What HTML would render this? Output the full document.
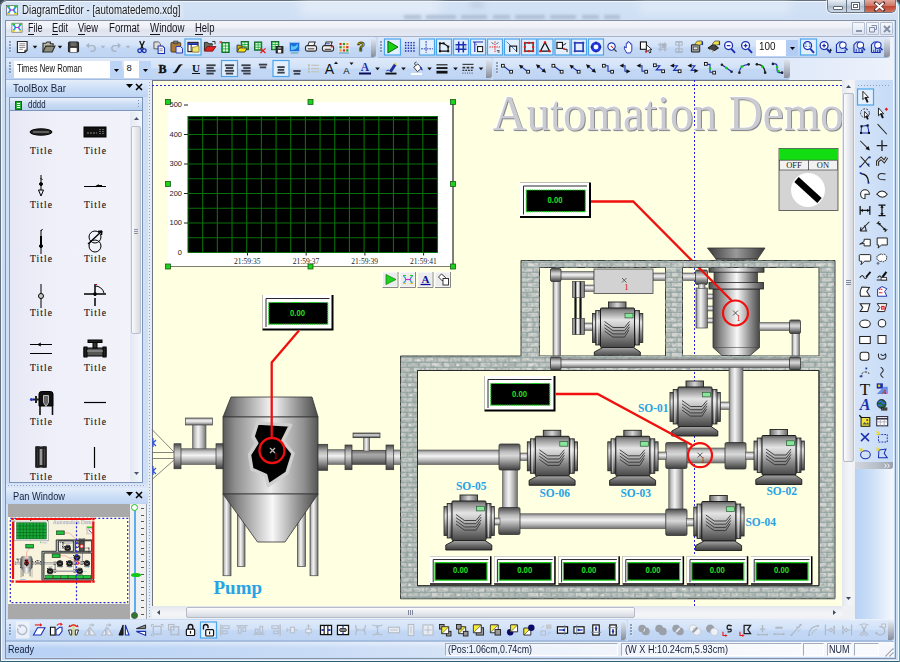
<!DOCTYPE html>
<html lang="en"><head><meta charset="utf-8"><title>DiagramEditor - [automatedemo.xdg]</title>
<style>
html,body{margin:0;padding:0;background:#3f4a56}
body{width:900px;height:662px;overflow:hidden;position:relative;font-family:"Liberation Sans",sans-serif}
#win{position:absolute;left:0;top:0;width:900px;height:662px;overflow:hidden}
#win i{display:block}
svg{overflow:visible}
</style></head><body><div id="win">
<div style="position:absolute;left:0px;top:0px;width:900px;height:662px;background:#d3e3f5;border-radius:7px 7px 0 0;"></div>
<div style="position:absolute;left:0px;top:0px;width:898px;height:660px;border:1px solid #62707f;border-right-color:#43a9cf;border-bottom-color:#2f6072;border-radius:7px 7px 1px 1px;box-shadow:inset 0 0 0 1px rgba(255,255,255,.75);background:linear-gradient(#d3e2f5,#cfdff4 20px,#cbddf4 300px,#cbddf5);"></div>
<div style="position:absolute;left:300px;top:0px;width:140px;height:14px;background:#eef4fb;filter:blur(6px);opacity:.7"></div>
<div style="position:absolute;left:640px;top:2px;width:150px;height:10px;background:#e9f1fa;filter:blur(5px);opacity:.7"></div>
<div style="position:absolute;left:404px;top:15px;width:216px;height:4px;background:repeating-linear-gradient(90deg,#76869c 0 17px,transparent 17px 22px,#76869c 22px 52px,transparent 52px 57px,#76869c 57px 83px,transparent 83px 89px);filter:blur(1.8px);opacity:.38"></div>
<div style="position:absolute;left:470px;top:2px;width:14px;height:5px;background:#9fb0c4;filter:blur(3px);opacity:.5"></div>
<div style="position:absolute;left:5px;top:20px;width:889px;height:637px;border:1px solid #8790a0;background:#c7dbf4;box-sizing:content-box;"></div>
<span style='position:absolute;left:22px;top:3.3px;font:12px/14.4px "Liberation Sans",sans-serif;color:#1a1a1a;white-space:nowrap;transform-origin:0 50%;transform:scale(0.8056,1);text-shadow:0 0 5px #fff,0 0 8px #fff;'>DiagramEditor - [automatedemo.xdg]</span>
<div style="position:absolute;left:827px;top:0px;width:67px;height:12px;border:1px solid #6b7684;border-top:none;border-radius:0 0 5px 5px;background:linear-gradient(#e8eef6,#c3cfde 45%,#aebccf 50%,#cdd8e6);box-shadow:0 0 0 1px rgba(255,255,255,.6);overflow:hidden"><div style="position:absolute;left:18px;top:0;width:1px;height:13px;background:#6b7684"></div><div style="position:absolute;left:36px;top:0;width:31px;height:13px;border-left:1px solid #6b7684;background:linear-gradient(#e3ab9f,#cf7563 45%,#bd4833 50%,#d27a64)"></div><div style="position:absolute;left:5px;top:5.500px;width:8px;height:2px;background:#fff;border:1px solid #5a6573;border-radius:1px"></div><div style="position:absolute;left:23px;top:2px;width:7px;height:6px;border:1px solid #5a6573;background:#fff;box-shadow:inset 0 0 0 1px #fff,inset 0 0 0 2px #5a6573"></div><svg style="position:absolute;left:46px;top:2px" width="11" height="9" viewBox="0 0 11 9"><path d="M1.5 1L9.5 8M9.5 1L1.5 8" stroke="#5a3030" stroke-width="3.4" stroke-linecap="round"/><path d="M1.5 1L9.5 8M9.5 1L1.5 8" stroke="#fff" stroke-width="2"/></svg></div>
<div style="position:absolute;left:6px;top:21px;width:888px;height:15px;background:linear-gradient(#f3f5fa,#eef1f7 40%,#dfe3ee 60%,#e4e8f2);border-bottom:1px solid #a7b3c8;"></div>
<span style='position:absolute;left:27.5px;top:20.8px;font:12px/14.4px "Liberation Sans",sans-serif;color:#15151f;white-space:nowrap;transform-origin:0 50%;transform:scale(0.7499,1);'>File</span>
<div style="position:absolute;left:27.5px;top:34px;width:6px;height:1px;background:#15151f"></div>
<span style='position:absolute;left:52px;top:20.8px;font:12px/14.4px "Liberation Sans",sans-serif;color:#15151f;white-space:nowrap;transform-origin:0 50%;transform:scale(0.7738,1);'>Edit</span>
<div style="position:absolute;left:52px;top:34px;width:6px;height:1px;background:#15151f"></div>
<span style='position:absolute;left:78px;top:20.8px;font:12px/14.4px "Liberation Sans",sans-serif;color:#15151f;white-space:nowrap;transform-origin:0 50%;transform:scale(0.7754,1);'>View</span>
<div style="position:absolute;left:78px;top:34px;width:7px;height:1px;background:#15151f"></div>
<span style='position:absolute;left:108.5px;top:20.8px;font:12px/14.4px "Liberation Sans",sans-serif;color:#15151f;white-space:nowrap;transform-origin:0 50%;transform:scale(0.8026,1);'>Format</span>
<span style='position:absolute;left:149.5px;top:20.8px;font:12px/14.4px "Liberation Sans",sans-serif;color:#15151f;white-space:nowrap;transform-origin:0 50%;transform:scale(0.8084,1);'>Window</span>
<div style="position:absolute;left:149.5px;top:34px;width:10px;height:1px;background:#15151f"></div>
<span style='position:absolute;left:194.5px;top:20.8px;font:12px/14.4px "Liberation Sans",sans-serif;color:#15151f;white-space:nowrap;transform-origin:0 50%;transform:scale(0.7902,1);'>Help</span>
<div style="position:absolute;left:194.5px;top:34px;width:8px;height:1px;background:#15151f"></div>
<div style="position:absolute;left:852px;top:22px;width:13px;height:13px;border:1px solid #b5c0d4;background:linear-gradient(#f6f8fc,#dfe5f0);box-sizing:border-box;border-radius:1px"></div>
<div style="position:absolute;left:866px;top:22px;width:13px;height:13px;border:1px solid #b5c0d4;background:linear-gradient(#f6f8fc,#dfe5f0);box-sizing:border-box;border-radius:1px"></div>
<div style="position:absolute;left:880px;top:22px;width:13px;height:13px;border:1px solid #b5c0d4;background:linear-gradient(#f6f8fc,#dfe5f0);box-sizing:border-box;border-radius:1px"></div>
<div style="position:absolute;left:856px;top:30px;width:6px;height:2px;background:#8a96ac"></div>
<svg style="position:absolute;left:869px;top:25px" width="8" height="8"><path d="M2.5 .5h5v4h-2M.5 2.5h5v4.5h-5z" fill="none" stroke="#7f8ca6"/></svg>
<svg style="position:absolute;left:883px;top:25px" width="8" height="8"><path d="M1 1l6 6M7 1l-6 6" stroke="#7f8ca6" stroke-width="1.8"/></svg>
<div style="position:absolute;left:6px;top:37px;width:888px;height:21px;background:linear-gradient(90deg,#c4d9f5,#cbddf6 70%,#edf2fb);"></div>
<div style="position:absolute;left:6px;top:37px;width:370px;height:20px;background:linear-gradient(#dfeafa,#d2e2f8 45%,#c3d8f5 55%,#bfd5f3);border-radius:0 3px 3px 0;border-bottom:1px solid #a3bbdc;"></div>
<div style="position:absolute;left:371px;top:39px;width:5px;height:18px;background:linear-gradient(#dde3ec,#b4bbc6 50%,#878e99);border-radius:0 3px 3px 0;"></div>
<div style="position:absolute;left:378px;top:37px;width:512px;height:20px;background:linear-gradient(#dfeafa,#d2e2f8 45%,#c3d8f5 55%,#bfd5f3);border-radius:0 3px 3px 0;border-bottom:1px solid #a3bbdc;"></div>
<div style="position:absolute;left:884px;top:39px;width:6px;height:18px;background:linear-gradient(#dde3ec,#b4bbc6 50%,#878e99);border-radius:0 3px 3px 0;"></div>
<div style="position:absolute;left:9px;top:41px;width:3px;height:13px;"><i style="position:absolute;left:0;top:0px;width:2px;height:2px;background:#8c9db8;box-shadow:.5px .5px 0 rgba(255,255,255,.6)"></i><i style="position:absolute;left:0;top:3px;width:2px;height:2px;background:#8c9db8;box-shadow:.5px .5px 0 rgba(255,255,255,.6)"></i><i style="position:absolute;left:0;top:6px;width:2px;height:2px;background:#8c9db8;box-shadow:.5px .5px 0 rgba(255,255,255,.6)"></i><i style="position:absolute;left:0;top:9px;width:2px;height:2px;background:#8c9db8;box-shadow:.5px .5px 0 rgba(255,255,255,.6)"></i></div>
<div style="position:absolute;left:380px;top:41px;width:3px;height:13px;"><i style="position:absolute;left:0;top:0px;width:2px;height:2px;background:#8c9db8;box-shadow:.5px .5px 0 rgba(255,255,255,.6)"></i><i style="position:absolute;left:0;top:3px;width:2px;height:2px;background:#8c9db8;box-shadow:.5px .5px 0 rgba(255,255,255,.6)"></i><i style="position:absolute;left:0;top:6px;width:2px;height:2px;background:#8c9db8;box-shadow:.5px .5px 0 rgba(255,255,255,.6)"></i><i style="position:absolute;left:0;top:9px;width:2px;height:2px;background:#8c9db8;box-shadow:.5px .5px 0 rgba(255,255,255,.6)"></i></div>
<div style="position:absolute;left:6px;top:58px;width:888px;height:22px;background:linear-gradient(90deg,#c4d9f5,#cbddf6 70%,#edf2fb);"></div>
<div style="position:absolute;left:6px;top:58px;width:486px;height:21px;background:linear-gradient(#dfeafa,#d2e2f8 45%,#c3d8f5 55%,#bfd5f3);border-radius:0 3px 3px 0;border-bottom:1px solid #a3bbdc;"></div>
<div style="position:absolute;left:486px;top:60px;width:6px;height:18px;background:linear-gradient(#dde3ec,#b4bbc6 50%,#878e99);border-radius:0 3px 3px 0;"></div>
<div style="position:absolute;left:493px;top:58px;width:297px;height:21px;background:linear-gradient(#dfeafa,#d2e2f8 45%,#c3d8f5 55%,#bfd5f3);border-radius:0 3px 3px 0;border-bottom:1px solid #a3bbdc;"></div>
<div style="position:absolute;left:784px;top:60px;width:6px;height:18px;background:linear-gradient(#dde3ec,#b4bbc6 50%,#878e99);border-radius:0 3px 3px 0;"></div>
<div style="position:absolute;left:9px;top:62px;width:3px;height:13px;"><i style="position:absolute;left:0;top:0px;width:2px;height:2px;background:#8c9db8;box-shadow:.5px .5px 0 rgba(255,255,255,.6)"></i><i style="position:absolute;left:0;top:3px;width:2px;height:2px;background:#8c9db8;box-shadow:.5px .5px 0 rgba(255,255,255,.6)"></i><i style="position:absolute;left:0;top:6px;width:2px;height:2px;background:#8c9db8;box-shadow:.5px .5px 0 rgba(255,255,255,.6)"></i><i style="position:absolute;left:0;top:9px;width:2px;height:2px;background:#8c9db8;box-shadow:.5px .5px 0 rgba(255,255,255,.6)"></i></div>
<div style="position:absolute;left:496px;top:62px;width:3px;height:13px;"><i style="position:absolute;left:0;top:0px;width:2px;height:2px;background:#8c9db8;box-shadow:.5px .5px 0 rgba(255,255,255,.6)"></i><i style="position:absolute;left:0;top:3px;width:2px;height:2px;background:#8c9db8;box-shadow:.5px .5px 0 rgba(255,255,255,.6)"></i><i style="position:absolute;left:0;top:6px;width:2px;height:2px;background:#8c9db8;box-shadow:.5px .5px 0 rgba(255,255,255,.6)"></i><i style="position:absolute;left:0;top:9px;width:2px;height:2px;background:#8c9db8;box-shadow:.5px .5px 0 rgba(255,255,255,.6)"></i></div>
<div style="position:absolute;left:14px;top:61px;width:96px;height:17px;background:#fff"></div>
<div style="position:absolute;left:110px;top:61px;width:12px;height:17px;background:#bcd4f6"></div>
<div style="position:absolute;left:124px;top:61px;width:15px;height:17px;background:#fff"></div>
<div style="position:absolute;left:139px;top:61px;width:12px;height:17px;background:#bcd4f6"></div>
<span style='position:absolute;left:17px;top:61.7px;font:10.5px/12.6px "Liberation Sans",sans-serif;color:#111;white-space:nowrap;transform-origin:0 50%;transform:scale(0.7313,1);'>Times New Roman</span>
<span style='position:absolute;left:126.5px;top:61.8px;font:9.5px/11.4px "Liberation Sans",sans-serif;color:#111;white-space:nowrap;transform-origin:0 50%;transform:scale(1.0000,1);'>8</span>
<svg style="position:absolute;left:114px;top:69px" width="5" height="3"><path d="M0 0h5L2.5 3z" fill="#000"/></svg>
<svg style="position:absolute;left:143px;top:69px" width="5" height="3"><path d="M0 0h5L2.5 3z" fill="#000"/></svg>
<div style="position:absolute;left:756px;top:40px;width:30px;height:16px;background:#fff"></div>
<div style="position:absolute;left:786px;top:40px;width:12px;height:16px;background:#b2ccf5"></div>
<span style='position:absolute;left:759px;top:40.5px;font:10px/12.0px "Liberation Sans",sans-serif;color:#111;white-space:nowrap;transform-origin:0 50%;transform:scale(0.9890,1);'>100</span>
<svg style="position:absolute;left:790px;top:47px" width="5" height="3"><path d="M0 0h5L2.5 3z" fill="#000"/></svg>
<div style="position:absolute;left:6px;top:80px;width:142px;height:539px;background:#cfe0f6"></div>
<div style="position:absolute;left:6px;top:80px;width:142px;height:17px;background:linear-gradient(#e4eefb,#cddff7 50%,#bdd4f4)"></div>
<span style='position:absolute;left:13px;top:81.9px;font:11px/13.2px "Liberation Sans",sans-serif;color:#15203a;white-space:nowrap;transform-origin:0 50%;transform:scale(0.8937,1);'>ToolBox Bar</span>
<svg style="position:absolute;left:126px;top:83.500px" width="7" height="4"><path d="M0 0h7L3.5 4z" fill="#000"/></svg>
<svg style="position:absolute;left:135px;top:82.700px" width="8" height="8"><path d="M1 1l6 6M7 1l-6 6" stroke="#000" stroke-width="1.5"/></svg>
<div style="position:absolute;left:9px;top:97px;width:134px;height:14px;border:1px solid #7d95b8;box-sizing:border-box;background:linear-gradient(#e9f1fc,#cbdcf4 50%,#bcd2f1)"></div>
<div style="position:absolute;left:15px;top:101px;width:7px;height:9px;background:#1fae2f;border:1px solid #0a6a14;box-sizing:border-box"><div style="position:absolute;left:1px;top:1px;width:3px;height:5px;background:repeating-linear-gradient(#fff 0 1px,#1fae2f 1px 2px)"></div></div>
<span style='position:absolute;left:28px;top:97.9px;font:11px/13.2px "Liberation Sans",sans-serif;color:#15203a;white-space:nowrap;transform-origin:0 50%;transform:scale(0.7152,1);'>dddd</span>
<div style="position:absolute;left:138px;top:100px;width:1px;height:9px;background:repeating-linear-gradient(#7d95b8 0 1px,transparent 1px 3px)"></div>
<div style="position:absolute;left:9px;top:111px;width:134px;height:372px;border:1px solid #7d95b8;border-top:none;box-sizing:border-box;background:linear-gradient(90deg,#e6e8f5,#eeeff8 30%,#f3f4fa)"></div>
<div style="position:absolute;left:130px;top:112px;width:12px;height:370px;background:linear-gradient(90deg,#e3e9f3,#f4f6fa)"></div>
<div style="position:absolute;left:131px;top:126px;width:10px;height:208px;border:1px solid #b9c0cc;box-sizing:border-box;border-radius:2px;background:linear-gradient(90deg,#fbfbfc,#e7e9ee 50%,#d7dae2)"></div>
<div style="position:absolute;left:134px;top:229px;width:4px;height:1px;background:#8a93a3;box-shadow:0 2px 0 #8a93a3,0 4px 0 #8a93a3"></div>
<svg style="position:absolute;left:134px;top:117px" width="5" height="3"><path d="M0 3h5L2.500 0z" fill="#4a5568"/></svg>
<svg style="position:absolute;left:134px;top:472px" width="5" height="3"><path d="M0 0h5L2.500 3z" fill="#4a5568"/></svg>
<svg style="position:absolute;left:0;top:0" width="150" height="490" viewBox="0 0 150 490"><text x="30" y="153.8" font-family='"Liberation Serif",serif' font-size="9.500" fill="#111" stroke="#111" stroke-width=".12" textLength="22" lengthAdjust="spacing">Title</text><text x="84" y="153.8" font-family='"Liberation Serif",serif' font-size="9.500" fill="#111" stroke="#111" stroke-width=".12" textLength="22" lengthAdjust="spacing">Title</text><text x="30" y="207.8" font-family='"Liberation Serif",serif' font-size="9.500" fill="#111" stroke="#111" stroke-width=".12" textLength="22" lengthAdjust="spacing">Title</text><text x="84" y="207.8" font-family='"Liberation Serif",serif' font-size="9.500" fill="#111" stroke="#111" stroke-width=".12" textLength="22" lengthAdjust="spacing">Title</text><text x="30" y="261.8" font-family='"Liberation Serif",serif' font-size="9.500" fill="#111" stroke="#111" stroke-width=".12" textLength="22" lengthAdjust="spacing">Title</text><text x="84" y="261.8" font-family='"Liberation Serif",serif' font-size="9.500" fill="#111" stroke="#111" stroke-width=".12" textLength="22" lengthAdjust="spacing">Title</text><text x="30" y="315.8" font-family='"Liberation Serif",serif' font-size="9.500" fill="#111" stroke="#111" stroke-width=".12" textLength="22" lengthAdjust="spacing">Title</text><text x="84" y="315.8" font-family='"Liberation Serif",serif' font-size="9.500" fill="#111" stroke="#111" stroke-width=".12" textLength="22" lengthAdjust="spacing">Title</text><text x="30" y="370.8" font-family='"Liberation Serif",serif' font-size="9.500" fill="#111" stroke="#111" stroke-width=".12" textLength="22" lengthAdjust="spacing">Title</text><text x="84" y="370.8" font-family='"Liberation Serif",serif' font-size="9.500" fill="#111" stroke="#111" stroke-width=".12" textLength="22" lengthAdjust="spacing">Title</text><text x="30" y="424.8" font-family='"Liberation Serif",serif' font-size="9.500" fill="#111" stroke="#111" stroke-width=".12" textLength="22" lengthAdjust="spacing">Title</text><text x="84" y="424.8" font-family='"Liberation Serif",serif' font-size="9.500" fill="#111" stroke="#111" stroke-width=".12" textLength="22" lengthAdjust="spacing">Title</text><text x="30" y="479.8" font-family='"Liberation Serif",serif' font-size="9.500" fill="#111" stroke="#111" stroke-width=".12" textLength="22" lengthAdjust="spacing">Title</text><text x="84" y="479.8" font-family='"Liberation Serif",serif' font-size="9.500" fill="#111" stroke="#111" stroke-width=".12" textLength="22" lengthAdjust="spacing">Title</text></svg>
<svg style="position:absolute;left:0;top:0" width="150" height="490" viewBox="0 0 150 490" fill="none" stroke="#000" stroke-width="1"><ellipse cx="41" cy="132" rx="11" ry="3.2" fill="#222"/><path d="M33 132h16" stroke="#999"/><rect x="84" y="127" width="22" height="10" fill="#111"/><path d="M87 133h10" stroke="#888" stroke-dasharray="2 1"/><path d="M100 129v6M103 129v6" stroke="#aaa" stroke-dasharray="1 1"/><path d="M41 175v7M40.5 178l2 2M41 184v6M38.500 190h5l-2.5 6z"/><circle cx="41" cy="184" r="1.5" fill="#000"/><path d="M84 186.500h22M97 185.500h5" /><path d="M96 186.500l3-1.500" stroke-width="1.500"/><path d="M41 230v24M41 231l1.500-2" /><path d="M41 236v12" stroke-width="2"/><circle cx="41" cy="246" r="1.500" fill="#000"/><circle cx="95" cy="237" r="6"/><circle cx="95" cy="246" r="6"/><path d="M88 244l14-13M102 231l-4 .5M102 231l-.5 4" stroke-width="1.300"/><path d="M41 284v24"/><circle cx="41" cy="296" r="2.500" fill="#ccc"/><path d="M84 294h9M97 294h9M95 284v8M95 298v8" stroke-width="1.500"/><path d="M95 286a9 9 0 0 1 9 7" /><circle cx="95" cy="294" r="1.500" fill="#000"/><path d="M95 286l2-2" stroke="#c00"/><path d="M30 344.500h22M30 353.500h22M38 344.500l3-1.500M38 344.500l3 1.500"/><rect x="84" y="348" width="22" height="8" fill="#555"/><rect x="84" y="347" width="3" height="10" fill="#222"/><rect x="103" y="347" width="3" height="10" fill="#222"/><rect x="93" y="341" width="4" height="7" fill="#333"/><rect x="88" y="340" width="14" height="2.500" fill="#222"/><path d="M87 351h16" stroke="#aaa"/><path d="M39 394q0-2.500 2.500-2.500h9q2.500 0 2.500 2.500v12h-14z" fill="#111"/><path d="M40 406v9M52.500 406v9" stroke="#111" stroke-width="1.600"/><path d="M43.500 395.500h5v7l-2.500 4-2.500-4z" fill="#666" stroke="#ddd" stroke-width=".8"/><path d="M33 399.500h6M36 396v7" stroke="#222" stroke-width="2"/><circle cx="31.500" cy="399.500" r="1.600" fill="#2233cc" stroke="none"/><path d="M84 402.500h22" stroke-width="1.200"/><rect x="36" y="447" width="10" height="20" fill="#999"/><rect x="36" y="447" width="3" height="20" fill="#333"/><rect x="43" y="447" width="3" height="20" fill="#444"/><path d="M36 448h10M36 466h10" stroke="#222" stroke-width="2"/><path d="M94.500 447v21" stroke-width="1.200"/></svg>
<div style="position:absolute;left:6px;top:484px;width:142px;height:4px;background:#dbe7f8"></div>
<div style="position:absolute;left:8px;top:485px;width:138px;height:1px;background:repeating-linear-gradient(90deg,#8ea2c0 0 1px,transparent 1px 3px)"></div>
<div style="position:absolute;left:6px;top:488px;width:142px;height:16px;background:linear-gradient(#e4eefb,#cddff7 50%,#bdd4f4)"></div>
<span style='position:absolute;left:13px;top:489.9px;font:11px/13.2px "Liberation Sans",sans-serif;color:#15203a;white-space:nowrap;transform-origin:0 50%;transform:scale(0.8421,1);'>Pan Window</span>
<svg style="position:absolute;left:126px;top:491.500px" width="7" height="4"><path d="M0 0h7L3.5 4z" fill="#000"/></svg>
<svg style="position:absolute;left:135px;top:490.700px" width="8" height="8"><path d="M1 1l6 6M7 1l-6 6" stroke="#000" stroke-width="1.5"/></svg>
<div style="position:absolute;left:8px;top:504px;width:122px;height:115px;background:#a9a9a9"></div>
<div style="position:absolute;left:8px;top:517px;width:121px;height:87px;background:#ffffe1"></div>
<div style="position:absolute;left:130px;top:504px;width:18px;height:115px;background:#f0f0f0"></div>
<div style="position:absolute;left:146px;top:504px;width:1px;height:115px;background:#9aa0aa"></div>
<div style="position:absolute;left:134px;top:509px;width:2px;height:105px;background:#5aaef2"></div>
<div style="position:absolute;left:130.5px;top:504px;width:5px;height:5px;border:1px solid #20c020;border-radius:50%;background:#fff"></div>
<div style="position:absolute;left:131px;top:612px;width:5px;height:5px;border-radius:50%;background:#2a7a2a;border:1px solid #555"></div>
<div style="position:absolute;left:131px;top:573px;width:10px;height:4px;border-radius:50%;background:#12c812"></div>
<div style="position:absolute;left:141px;top:508px;width:3px;height:110px;"><i style="position:absolute;left:0;top:0.0px;width:3px;height:1px;background:#555"></i><i style="position:absolute;left:0;top:6.6px;width:3px;height:1px;background:#555"></i><i style="position:absolute;left:0;top:13.2px;width:3px;height:1px;background:#555"></i><i style="position:absolute;left:0;top:19.8px;width:3px;height:1px;background:#555"></i><i style="position:absolute;left:0;top:26.4px;width:3px;height:1px;background:#555"></i><i style="position:absolute;left:0;top:33.0px;width:3px;height:1px;background:#555"></i><i style="position:absolute;left:0;top:39.6px;width:3px;height:1px;background:#555"></i><i style="position:absolute;left:0;top:46.2px;width:3px;height:1px;background:#555"></i><i style="position:absolute;left:0;top:52.8px;width:3px;height:1px;background:#555"></i><i style="position:absolute;left:0;top:59.4px;width:3px;height:1px;background:#555"></i><i style="position:absolute;left:0;top:66.0px;width:3px;height:1px;background:#555"></i><i style="position:absolute;left:0;top:72.6px;width:3px;height:1px;background:#555"></i><i style="position:absolute;left:0;top:79.2px;width:3px;height:1px;background:#555"></i><i style="position:absolute;left:0;top:85.8px;width:3px;height:1px;background:#555"></i><i style="position:absolute;left:0;top:92.4px;width:3px;height:1px;background:#555"></i><i style="position:absolute;left:0;top:99.0px;width:3px;height:1px;background:#555"></i><i style="position:absolute;left:0;top:105.6px;width:3px;height:1px;background:#555"></i></div>
<div style="position:absolute;left:148px;top:80px;width:4px;height:539px;background:#e4ecf8"></div>
<div style="position:absolute;left:149px;top:82px;width:1px;height:536px;background:repeating-linear-gradient(#8ea2c0 0 1px,transparent 1px 3px)"></div>
<div style="position:absolute;left:855px;top:80px;width:39px;height:539px;background:linear-gradient(90deg,#b7d2f5,#cadef7 40%,#f3f7fd 95%)"></div>
<div style="position:absolute;left:855px;top:80px;width:38px;height:389px;background:linear-gradient(90deg,#d6e5f9,#c6dbf6);border-radius:0 0 3px 3px"></div>
<div style="position:absolute;left:855px;top:462px;width:38px;height:7px;background:linear-gradient(90deg,#d0d5dd,#b8bec8 60%,#9aa1ac);border-radius:0 0 3px 3px;"></div>
<div style="position:absolute;left:858px;top:85px;width:32px;height:1px;background:repeating-linear-gradient(90deg,#8ea2c0 0 1px,transparent 1px 3px)"></div>
<div style="position:absolute;left:152px;top:80px;width:690px;height:526px;background:#ffffe1;border-left:1px solid #70757f;border-top:1px solid #70757f;box-sizing:border-box"></div>
<svg style="position:absolute;left:152px;top:81px" width="690" height="525" viewBox="152 81 690 525"><defs>
<pattern id="brick" width="48" height="20" patternUnits="userSpaceOnUse" x="401" y="357">
<rect width="48" height="20" fill="#93a4a2"/>
<rect x="0.6" y="0.8" width="10.900" height="3.900" fill="#c8cbc5"/>
<rect x="3.4" y="2.0" width="3.7" height="1.800" fill="#c3cbc8"/>
<rect x="12.6" y="0.8" width="10.900" height="3.900" fill="#c8cbc5"/>
<rect x="15.9" y="2.2" width="3.3" height="1.800" fill="#e2e3df"/>
<rect x="24.6" y="0.8" width="10.900" height="3.900" fill="#cbcdc8"/>
<rect x="29.9" y="1.7" width="2.2" height="1.800" fill="#e2e3df"/>
<rect x="36.6" y="0.8" width="10.900" height="3.900" fill="#cbcdc8"/>
<rect x="48.6" y="0.8" width="10.900" height="3.900" fill="#bcc1bd"/>
<rect x="54.2" y="2.1" width="2.3" height="1.800" fill="#e2e3df"/>
<rect x="-5.4" y="5.8" width="10.900" height="3.900" fill="#c5c8c3"/>
<rect x="6.6" y="5.8" width="10.900" height="3.900" fill="#bcc1bd"/>
<rect x="7.6" y="7.2" width="2.4" height="1.800" fill="#e2e3df"/>
<rect x="18.6" y="5.8" width="10.900" height="3.900" fill="#c5c8c3"/>
<rect x="30.6" y="5.8" width="10.900" height="3.900" fill="#d2d3cf"/>
<rect x="32.6" y="7.2" width="3.3" height="1.800" fill="#e2e3df"/>
<rect x="42.6" y="5.8" width="10.900" height="3.900" fill="#d4d6d1"/>
<rect x="48.4" y="6.7" width="2.0" height="1.800" fill="#bcc2be"/>
<rect x="0.6" y="10.8" width="10.900" height="3.900" fill="#c5c8c3"/>
<rect x="12.6" y="10.8" width="10.900" height="3.900" fill="#d2d3cf"/>
<rect x="15.1" y="11.9" width="2.0" height="1.800" fill="#c3cbc8"/>
<rect x="24.6" y="10.8" width="10.900" height="3.900" fill="#d4d6d1"/>
<rect x="27.1" y="12.1" width="3.0" height="1.800" fill="#bcc2be"/>
<rect x="36.6" y="10.8" width="10.900" height="3.900" fill="#c5c8c3"/>
<rect x="41.1" y="11.4" width="4.0" height="1.800" fill="#e2e3df"/>
<rect x="48.6" y="10.8" width="10.900" height="3.900" fill="#d4d6d1"/>
<rect x="51.6" y="11.8" width="2.8" height="1.800" fill="#bcc2be"/>
<rect x="-5.4" y="15.8" width="10.900" height="3.900" fill="#c8cbc5"/>
<rect x="6.6" y="15.8" width="10.900" height="3.900" fill="#bcc1bd"/>
<rect x="8.5" y="17.3" width="2.4" height="1.800" fill="#e2e3df"/>
<rect x="18.6" y="15.8" width="10.900" height="3.900" fill="#c0c5c1"/>
<rect x="30.6" y="15.8" width="10.900" height="3.900" fill="#d2d3cf"/>
<rect x="36.1" y="16.6" width="2.9" height="1.800" fill="#c3cbc8"/>
<rect x="42.6" y="15.8" width="10.900" height="3.900" fill="#d4d6d1"/>
</pattern>
<linearGradient id="hp" x1="0" y1="0" x2="0" y2="1"><stop offset="0" stop-color="#7a7a7a"/><stop offset=".18" stop-color="#c4c4c4"/><stop offset=".42" stop-color="#f4f4f4"/><stop offset=".7" stop-color="#bdbdbd"/><stop offset="1" stop-color="#6e6e6e"/></linearGradient>
<linearGradient id="vp" x1="0" y1="0" x2="1" y2="0"><stop offset="0" stop-color="#7a7a7a"/><stop offset=".18" stop-color="#c4c4c4"/><stop offset=".42" stop-color="#f4f4f4"/><stop offset=".7" stop-color="#bdbdbd"/><stop offset="1" stop-color="#6e6e6e"/></linearGradient>
<linearGradient id="hj" x1="0" y1="0" x2="0" y2="1"><stop offset="0" stop-color="#4a4a4a"/><stop offset=".3" stop-color="#bdbdbd"/><stop offset=".45" stop-color="#d8d8d8"/><stop offset="1" stop-color="#3e3e3e"/></linearGradient>
<linearGradient id="vj" x1="0" y1="0" x2="1" y2="0"><stop offset="0" stop-color="#4a4a4a"/><stop offset=".3" stop-color="#bdbdbd"/><stop offset=".45" stop-color="#d8d8d8"/><stop offset="1" stop-color="#3e3e3e"/></linearGradient>
<linearGradient id="mb" x1="0" y1="0" x2="0" y2="1"><stop offset="0" stop-color="#5c5c5c"/><stop offset=".08" stop-color="#909090"/><stop offset=".3" stop-color="#e4e4e4"/><stop offset=".42" stop-color="#d0d0d0"/><stop offset=".68" stop-color="#8a8a8a"/><stop offset="1" stop-color="#464646"/></linearGradient>
<linearGradient id="mc" x1="0" y1="0" x2="1" y2="0"><stop offset="0" stop-color="#3a3a3a"/><stop offset=".5" stop-color="#e0e0e0"/><stop offset="1" stop-color="#3a3a3a"/></linearGradient>
<linearGradient id="mt" x1="0" y1="0" x2="1" y2="0"><stop offset="0" stop-color="#6a6a6a"/><stop offset=".5" stop-color="#d6d6d6"/><stop offset="1" stop-color="#6a6a6a"/></linearGradient>
<linearGradient id="mbase" x1="0" y1="0" x2="0" y2="1"><stop offset="0" stop-color="#a8a8a8"/><stop offset=".5" stop-color="#6e6e6e"/><stop offset="1" stop-color="#3c3c3c"/></linearGradient>
<linearGradient id="tank" x1="0" y1="0" x2="1" y2="0"><stop offset="0" stop-color="#5a5a5a"/><stop offset=".12" stop-color="#8c8c8c"/><stop offset=".5" stop-color="#ececec"/><stop offset=".85" stop-color="#909090"/><stop offset="1" stop-color="#555"/></linearGradient>
<linearGradient id="tankd" x1="0" y1="0" x2="1" y2="0"><stop offset="0" stop-color="#4a4a4a"/><stop offset=".15" stop-color="#858585"/><stop offset=".52" stop-color="#f8f8f8"/><stop offset=".8" stop-color="#8e8e8e"/><stop offset="1" stop-color="#484848"/></linearGradient>
<linearGradient id="funnel" x1="0" y1="0" x2="1" y2="0"><stop offset="0" stop-color="#3a3a3a"/><stop offset=".5" stop-color="#9a9a9a"/><stop offset="1" stop-color="#3a3a3a"/></linearGradient>
<linearGradient id="valve" x1="0" y1="0" x2="0" y2="1"><stop offset="0" stop-color="#6a6a6a"/><stop offset=".3" stop-color="#a8a8a8"/><stop offset=".5" stop-color="#9a9a9a"/><stop offset="1" stop-color="#4a4a4a"/></linearGradient>
<filter id="mottle" x="-1%" y="-1%" width="102%" height="102%"><feTurbulence type="fractalNoise" baseFrequency=".22 .3" numOctaves="2" seed="7" result="n"/><feColorMatrix in="n" type="matrix" values="0 0 0 0 .25  0 0 0 0 .33  0 0 0 0 .32  0 0 0 1.6 -.62" result="m"/><feComposite in="m" in2="SourceGraphic" operator="in" result="mm"/><feMerge><feMergeNode in="SourceGraphic"/><feMergeNode in="mm"/></feMerge></filter>
<g id="motor">
 <rect x="16" y="0" width="17.500" height="6.500" fill="url(#mt)" stroke="#222" stroke-width=".9"/>
 <rect x="0" y="11.500" width="3.500" height="29" fill="url(#mb)" stroke="#222" stroke-width=".8"/>
 <rect x="46.800" y="11.500" width="3.500" height="29" fill="url(#mb)" stroke="#222" stroke-width=".8"/>
 <rect x="3.200" y="8.500" width="5" height="34.500" fill="url(#mb)" stroke="#222" stroke-width=".8"/>
 <rect x="42" y="8.500" width="5" height="34.500" fill="url(#mb)" stroke="#222" stroke-width=".8"/>
 <rect x="8" y="6" width="34" height="39.500" rx="1" fill="url(#mb)" stroke="#1c1c1c" stroke-width="1"/>
 <rect x="4.300" y="9" width="1.200" height="33.500" fill="#fff" opacity=".55"/>
 <rect x="43.800" y="9" width="1.200" height="33.500" fill="#fff" opacity=".55"/>
 <path d="M10.400 45.500h30.600l6.800 4.500v5h-46v-5z" fill="url(#mbase)" stroke="#1c1c1c" stroke-width=".9"/>
 <rect x="32.500" y="11.300" width="8" height="4.600" fill="#86e59a" stroke="#2d5a35" stroke-width=".7"/>
 <g fill="none" stroke="#333" stroke-width=".9">
  <path d="M12 19.500l8.500 6h11.500l5-6"/>
  <path d="M12 22.700l8.500 6h11.500l5-6.500"/>
  <path d="M12 25.900l8.500 6h11.500l5-7"/>
  <path d="M12 29.100l8.500 6h11.500l4.500-7"/>
 </g>
</g>
<g id="disp">
 <rect x="0" y="0" width="61.500" height="28.500" fill="#000"/>
 <rect x="0" y="0" width="60" height="27" fill="#fff"/>
 <path d="M3.200 26V3.300H58.500" fill="none" stroke="#2a2a2a" stroke-width="1"/>
 <rect x="5" y="6.400" width="52" height="17.500" fill="#000" stroke="#19d219" stroke-width="1.200"/>
</g>
<g id="dispL">
 <rect x="0" y="0" width="71" height="35.500" fill="#000"/>
 <rect x="0" y="0" width="69" height="33.500" fill="#fff"/>
 <path d="M3.500 32V3.500H67" fill="none" stroke="#2a2a2a" stroke-width="1"/>
 <rect x="6.300" y="7.500" width="59" height="21.700" fill="#000" stroke="#19d219" stroke-width="1.200" stroke-dasharray="1.200 .6"/>
</g>
</defs><path d="M152 85.500H842M694.500 80V606" stroke="#2222dd" stroke-width="1" stroke-dasharray="2 2" fill="none"/><g id="dwg"><rect x="168.500" y="102.500" width="285" height="164" fill="#000"/>
<rect x="168" y="102" width="284.500" height="164" fill="#fff"/>
<rect x="188" y="116" width="249.500" height="136.500" fill="#000"/>
<path d="M188.00 116V252.500 M202.68 116V252.500 M217.35 116V252.500 M232.03 116V252.500 M246.70 116V252.500 M261.38 116V252.500 M276.06 116V252.500 M290.73 116V252.500 M305.41 116V252.500 M320.08 116V252.500 M334.76 116V252.500 M349.44 116V252.500 M364.11 116V252.500 M378.79 116V252.500 M393.46 116V252.500 M408.14 116V252.500 M422.82 116V252.500 M437.49 116V252.500 M188 252.50H437.500 M188 237.75H437.500 M188 223.00H437.500 M188 208.25H437.500 M188 193.50H437.500 M188 178.75H437.500 M188 164.00H437.500 M188 149.25H437.500 M188 134.50H437.500 M188 119.75H437.500 M188 116.500H437.500" stroke="#087008" stroke-width="1.100" fill="none"/>
<text x="182" y="254.8" font-family='"Liberation Sans",sans-serif' font-size="7.5"   fill="#222" text-anchor="end" >0</text>
<text x="182" y="225.3" font-family='"Liberation Sans",sans-serif' font-size="7.5"   fill="#222" text-anchor="end" >100</text>
<path d="M184 223.0h4" stroke="#222" stroke-width="1"/>
<text x="182" y="195.8" font-family='"Liberation Sans",sans-serif' font-size="7.5"   fill="#222" text-anchor="end" >200</text>
<path d="M184 193.5h4" stroke="#222" stroke-width="1"/>
<text x="182" y="166.3" font-family='"Liberation Sans",sans-serif' font-size="7.5"   fill="#222" text-anchor="end" >300</text>
<path d="M184 164.0h4" stroke="#222" stroke-width="1"/>
<text x="182" y="136.8" font-family='"Liberation Sans",sans-serif' font-size="7.5"   fill="#222" text-anchor="end" >400</text>
<path d="M184 134.5h4" stroke="#222" stroke-width="1"/>
<text x="182" y="107.3" font-family='"Liberation Sans",sans-serif' font-size="7.5"   fill="#222" text-anchor="end" >500</text>
<path d="M184 105.0h4" stroke="#222" stroke-width="1"/>
<text x="247.3" y="263.5" font-family='"Liberation Serif",serif' font-size="7.5"   fill="#222" text-anchor="middle" >21:59:35</text>
<path d="M247.5 252.500v3" stroke="#222" stroke-width="1"/>
<text x="306.0" y="263.5" font-family='"Liberation Serif",serif' font-size="7.5"   fill="#222" text-anchor="middle" >21:59:37</text>
<path d="M306.2 252.500v3" stroke="#222" stroke-width="1"/>
<text x="364.70000000000005" y="263.5" font-family='"Liberation Serif",serif' font-size="7.5"   fill="#222" text-anchor="middle" >21:59:39</text>
<path d="M364.9 252.500v3" stroke="#222" stroke-width="1"/>
<text x="423.40000000000003" y="263.5" font-family='"Liberation Serif",serif' font-size="7.5"   fill="#222" text-anchor="middle" >21:59:41</text>
<path d="M423.6 252.500v3" stroke="#222" stroke-width="1"/>
<rect x="382.5" y="272" width="15" height="15" fill="#ececec" stroke="#fff" stroke-width="1"/><path d="M398.0 272v15.500h-15.500" fill="none" stroke="#888" stroke-width="1"/>
<rect x="400" y="272" width="15" height="15" fill="#ececec" stroke="#fff" stroke-width="1"/><path d="M415.5 272v15.500h-15.500" fill="none" stroke="#888" stroke-width="1"/>
<rect x="417.5" y="272" width="15" height="15" fill="#ececec" stroke="#fff" stroke-width="1"/><path d="M433.0 272v15.500h-15.500" fill="none" stroke="#888" stroke-width="1"/>
<rect x="435" y="272" width="15" height="15" fill="#ececec" stroke="#fff" stroke-width="1"/><path d="M450.5 272v15.500h-15.500" fill="none" stroke="#888" stroke-width="1"/>
<path d="M386 274.500l10 5-10 5z" fill="#1fd21f" stroke="#0a7a0a" stroke-width=".7"/>
<g stroke-width="1.200" fill="none"><path d="M403.500 276q4.500 3.500 0 7M412.500 276q-4.500 3.500 0 7" stroke="#39c"/><path d="M405 279.500h6" stroke="#c3c"/><path d="M403 275.500h3M410 275.500h3" stroke="#2c2"/><path d="M403 283.500h3M410 283.500h3" stroke="#dc2"/></g>
<text x="425.5" y="283" font-family='"Liberation Serif",serif' font-size="11" font-weight="bold"  fill="#10109a" text-anchor="middle" >A</text>
<path d="M420.500 284.500h10" stroke="#10109a" stroke-width="1.300"/>
<g fill="#fff" stroke="#222" stroke-width=".9"><path d="M438.500 277l3-3 4 3.500-3 3.500z"/><rect x="443" y="278.500" width="5.500" height="6.500"/></g>
<rect x="165.5" y="99.5" width="5" height="5" fill="#19d219" stroke="#1a5a1a" stroke-width=".8"/>
<rect x="308.0" y="99.5" width="5" height="5" fill="#19d219" stroke="#1a5a1a" stroke-width=".8"/>
<rect x="450.5" y="99.5" width="5" height="5" fill="#19d219" stroke="#1a5a1a" stroke-width=".8"/>
<rect x="165.5" y="181.5" width="5" height="5" fill="#19d219" stroke="#1a5a1a" stroke-width=".8"/>
<rect x="450.5" y="181.5" width="5" height="5" fill="#19d219" stroke="#1a5a1a" stroke-width=".8"/>
<rect x="165.5" y="264.0" width="5" height="5" fill="#19d219" stroke="#1a5a1a" stroke-width=".8"/>
<rect x="308.0" y="264.0" width="5" height="5" fill="#19d219" stroke="#1a5a1a" stroke-width=".8"/>
<rect x="450.5" y="264.0" width="5" height="5" fill="#19d219" stroke="#1a5a1a" stroke-width=".8"/>
<g transform="translate(492.500 130) scale(1 1.09)" style="filter:drop-shadow(1.2px 1.2px 0 #8a8a92) drop-shadow(-1px -1px 0 #fff)">
<text x="0" y="0" font-family='"Liberation Serif",serif' font-size="47" fill="#cbcbd2">Automation Demo</text>
</g>
<rect x="779" y="148.500" width="59" height="62" fill="#d4d4d4" stroke="#444" stroke-width=".8"/>
<rect x="779.400" y="148.900" width="58.200" height="11.300" fill="#12dc12"/>
<rect x="779.400" y="160.200" width="58.200" height="9.800" fill="#f2f2f2" stroke="#444" stroke-width=".7"/>
<path d="M808.500 160.200v9.800" stroke="#444" stroke-width=".8"/>
<text x="794" y="168.3" font-family='"Liberation Serif",serif' font-size="8.5"   fill="#222" text-anchor="middle" >OFF</text>
<text x="823" y="168.3" font-family='"Liberation Serif",serif' font-size="8.5"   fill="#222" text-anchor="middle" >ON</text>
<circle cx="808" cy="190" r="17" fill="#fff"/>
<path d="M796.500 179.500L819.500 200.500" stroke="#000" stroke-width="6.500"/>
<rect x="392" y="450" width="108" height="14.5" fill="url(#hp)" stroke="#555" stroke-width=".6"/>
<rect x="553" y="280" width="7.5" height="79" fill="url(#vp)" stroke="#555" stroke-width=".6"/>
<rect x="560" y="271.5" width="34" height="8.0" fill="url(#hp)" stroke="#555" stroke-width=".6"/>
<rect x="653" y="273" width="13" height="7.5" fill="url(#hp)" stroke="#555" stroke-width=".6"/>
<rect x="594" y="269" width="59" height="24.500" fill="#d2d2d2" stroke="#444" stroke-width=".8"/>
<rect x="550.5" y="268.5" width="10.5" height="13.0" rx="1.5" fill="url(#hj)" stroke="#333" stroke-width=".8"/>
<rect x="584" y="285" width="10" height="6.5" fill="url(#hp)" stroke="#555" stroke-width=".6"/>
<rect x="584" y="323" width="9" height="7.5" fill="url(#hp)" stroke="#555" stroke-width=".6"/>
<path d="M575.500 290v36M580.500 290v36" stroke="#111" stroke-width="2.200"/>
<rect x="572.500" y="281.5" width="12" height="16" fill="url(#vp)" stroke="#333" stroke-width=".6"/><path d="M575.500 281.5v16M580.500 281.5v16" stroke="#222" stroke-width="1.600"/>
<rect x="572.500" y="318.5" width="12" height="16" fill="url(#vp)" stroke="#333" stroke-width=".6"/><path d="M575.500 318.5v16M580.500 318.5v16" stroke="#222" stroke-width="1.600"/>
<use href="#motor" x="592.5" y="302"/>
<path d="M622 278l4.500 4.500M626.500 278l-4.500 4.500" stroke="#444" stroke-width=".8"/>
<text x="624.5" y="290" font-family='"Liberation Serif",serif' font-size="8"   fill="#e00000" text-anchor="start" >1</text>
<rect x="682" y="273" width="15" height="7.5" fill="url(#hp)" stroke="#555" stroke-width=".6"/>
<rect x="695.5" y="270" width="12.0" height="14.5" rx="1.5" fill="url(#hj)" stroke="#333" stroke-width=".8"/>
<rect x="696" y="288" width="11.500" height="40" fill="url(#vp)" stroke="#444" stroke-width=".7"/>
<rect x="707.500" y="294" width="6" height="5" fill="url(#hp)" stroke="#444" stroke-width=".5"/>
<rect x="707.500" y="306" width="6" height="5" fill="url(#hp)" stroke="#444" stroke-width=".5"/>
<rect x="707.500" y="318" width="6" height="5" fill="url(#hp)" stroke="#444" stroke-width=".5"/>
<rect x="698.5" y="284" width="6.5" height="4.5" fill="url(#vp)" stroke="#555" stroke-width=".6"/>
<path d="M707.500 248h57.500l-7.500 11h-41.500z" fill="url(#funnel)" stroke="#333" stroke-width=".8"/>
<path d="M716 259h41.500v2.500h-41.500z" fill="#777" stroke="#333" stroke-width=".6"/>
<rect x="714" y="271" width="43.500" height="12.500" fill="url(#tankd)" stroke="#333" stroke-width=".7"/>
<rect x="709" y="267.500" width="55" height="4.700" fill="url(#tankd)" stroke="#222" stroke-width=".8"/>
<path d="M713 289h46.500v58.500l-9.500 8h-28l-9-8z" fill="url(#tankd)" stroke="#333" stroke-width=".8"/>
<path d="M713 347.500h46.500" stroke="#444" stroke-width=".6"/>
<rect x="709" y="282.500" width="54.500" height="6.500" fill="url(#tankd)" stroke="#222" stroke-width=".8"/>
<rect x="759.5" y="322.5" width="31.5" height="8.0" fill="url(#hp)" stroke="#555" stroke-width=".6"/>
<rect x="792" y="332" width="7.5" height="26" fill="url(#vp)" stroke="#555" stroke-width=".6"/>
<rect x="789.5" y="320" width="11.0" height="13.5" rx="1.5" fill="url(#hj)" stroke="#333" stroke-width=".8"/>
<use href="#dispL" x="520" y="182.5"/><text x="555" y="203.3" font-family='"Liberation Sans",sans-serif' font-size="9.5" font-weight="bold"  fill="#22e022" text-anchor="middle" textLength="15" lengthAdjust="spacingAndGlyphs" >0.00</text>
<path d="M591 201.500H633.200L731.500 300.500" fill="none" stroke="#f01010" stroke-width="2.300"/>
<circle cx="735.5" cy="313" r="12.5" fill="none" stroke="#f01010" stroke-width="2.200"/><path d="M733.0 310.5l5 5M738.0 310.5l-5 5" stroke="#444" stroke-width=".9"/><text x="736.5" y="321" font-family='"Liberation Serif",serif' font-size="8"   fill="#e00000" text-anchor="start" >1</text>
<path filter="url(#mottle)" fill-rule="evenodd" fill="url(#brick)" stroke="#3a3a3a" stroke-width="1" d="M521 260.500H835V598.750H400.500V356H521zM539.500 267.500V356H665.500V267.500zM682.500 267.500V356H819V267.500zM417.500 370.500V585.750H819V370.500z"/>
<path filter="url(#mottle)" fill="url(#brick)" d="M539 356h280.500v14.500h-280.500z"/>
<path fill="none" stroke="#2a2a2a" stroke-width="1" d="M417.500 370.500H819V585.750H417.500z"/>
<rect x="560" y="359" width="231" height="8.5" fill="url(#hp)" stroke="#555" stroke-width=".6"/>
<rect x="550.5" y="357" width="10.5" height="13" rx="1.5" fill="url(#hj)" stroke="#333" stroke-width=".8"/>
<rect x="789.5" y="357" width="11.0" height="13" rx="1.5" fill="url(#hj)" stroke="#333" stroke-width=".8"/>
<rect x="729" y="367.5" width="14" height="75.5" fill="url(#vp)" stroke="#555" stroke-width=".6"/>
<rect x="520" y="453" width="8" height="7.5" fill="url(#hp)" stroke="#555" stroke-width=".6"/>
<rect x="502.5" y="469" width="15.0" height="40" fill="url(#vp)" stroke="#555" stroke-width=".6"/>
<rect x="499" y="444" width="21" height="26" rx="1.5" fill="url(#hj)" stroke="#333" stroke-width=".8"/>
<rect x="519" y="513.75" width="148" height="15.0" fill="url(#hp)" stroke="#555" stroke-width=".6"/>
<rect x="498.75" y="507.5" width="21.25" height="27.0" rx="1.5" fill="url(#hj)" stroke="#333" stroke-width=".8"/>
<rect x="494" y="518" width="6" height="7" fill="url(#hp)" stroke="#555" stroke-width=".6"/>
<rect x="686" y="448" width="40" height="15" fill="url(#hp)" stroke="#555" stroke-width=".6"/>
<rect x="668.75" y="467" width="14.25" height="44" fill="url(#vp)" stroke="#555" stroke-width=".6"/>
<rect x="665.75" y="442.5" width="21.25" height="26.0" rx="1.5" fill="url(#hj)" stroke="#333" stroke-width=".8"/>
<rect x="725" y="442.5" width="21" height="26.5" rx="1.5" fill="url(#hj)" stroke="#333" stroke-width=".8"/>
<rect x="665.75" y="509" width="21.25" height="26.5" rx="1.5" fill="url(#hj)" stroke="#333" stroke-width=".8"/>
<rect x="658" y="452" width="8.5" height="7.5" fill="url(#hp)" stroke="#555" stroke-width=".6"/>
<rect x="745.5" y="452" width="9.5" height="7.5" fill="url(#hp)" stroke="#555" stroke-width=".6"/>
<rect x="720" y="402" width="9.5" height="7.5" fill="url(#hp)" stroke="#555" stroke-width=".6"/>
<rect x="686.5" y="518.5" width="8.5" height="7.5" fill="url(#hp)" stroke="#555" stroke-width=".6"/>
<use href="#motor" x="527.3" y="430.3"/>
<use href="#motor" x="670" y="381"/>
<use href="#motor" x="607.8" y="430.3"/>
<use href="#motor" x="754" y="429.5"/>
<use href="#motor" x="693.8" y="495.5"/>
<use href="#motor" x="444" y="495"/>
<text x="456" y="490.3" font-family='"Liberation Serif",serif' font-size="12" font-weight="bold"  fill="#27a3e6" text-anchor="start" textLength="30.5" lengthAdjust="spacingAndGlyphs" >SO-05</text>
<text x="539.5" y="497.3" font-family='"Liberation Serif",serif' font-size="12" font-weight="bold"  fill="#27a3e6" text-anchor="start" textLength="30.5" lengthAdjust="spacingAndGlyphs" >SO-06</text>
<text x="620.5" y="497.3" font-family='"Liberation Serif",serif' font-size="12" font-weight="bold"  fill="#27a3e6" text-anchor="start" textLength="30.5" lengthAdjust="spacingAndGlyphs" >SO-03</text>
<text x="638" y="412.3" font-family='"Liberation Serif",serif' font-size="12" font-weight="bold"  fill="#27a3e6" text-anchor="start" textLength="30.5" lengthAdjust="spacingAndGlyphs" >SO-01</text>
<text x="766.5" y="495.3" font-family='"Liberation Serif",serif' font-size="12" font-weight="bold"  fill="#27a3e6" text-anchor="start" textLength="30.5" lengthAdjust="spacingAndGlyphs" >SO-02</text>
<text x="745.5" y="526.3" font-family='"Liberation Serif",serif' font-size="12" font-weight="bold"  fill="#27a3e6" text-anchor="start" textLength="30.5" lengthAdjust="spacingAndGlyphs" >SO-04</text>
<use href="#disp" x="430.0" y="556.25"/><text x="460.5" y="573.05" font-family='"Liberation Sans",sans-serif' font-size="9.5" font-weight="bold"  fill="#22e022" text-anchor="middle" textLength="15" lengthAdjust="spacingAndGlyphs" >0.00</text>
<use href="#disp" x="494.2" y="556.25"/><text x="524.7" y="573.05" font-family='"Liberation Sans",sans-serif' font-size="9.5" font-weight="bold"  fill="#22e022" text-anchor="middle" textLength="15" lengthAdjust="spacingAndGlyphs" >0.00</text>
<use href="#disp" x="558.4" y="556.25"/><text x="588.9" y="573.05" font-family='"Liberation Sans",sans-serif' font-size="9.5" font-weight="bold"  fill="#22e022" text-anchor="middle" textLength="15" lengthAdjust="spacingAndGlyphs" >0.00</text>
<use href="#disp" x="622.6" y="556.25"/><text x="653.1" y="573.05" font-family='"Liberation Sans",sans-serif' font-size="9.5" font-weight="bold"  fill="#22e022" text-anchor="middle" textLength="15" lengthAdjust="spacingAndGlyphs" >0.00</text>
<use href="#disp" x="686.8" y="556.25"/><text x="717.3" y="573.05" font-family='"Liberation Sans",sans-serif' font-size="9.5" font-weight="bold"  fill="#22e022" text-anchor="middle" textLength="15" lengthAdjust="spacingAndGlyphs" >0.00</text>
<use href="#disp" x="751.0" y="556.25"/><text x="781.5" y="573.05" font-family='"Liberation Sans",sans-serif' font-size="9.5" font-weight="bold"  fill="#22e022" text-anchor="middle" textLength="15" lengthAdjust="spacingAndGlyphs" >0.00</text>
<use href="#dispL" x="484.5" y="376"/><text x="519.5" y="396.8" font-family='"Liberation Sans",sans-serif' font-size="9.5" font-weight="bold"  fill="#22e022" text-anchor="middle" textLength="15" lengthAdjust="spacingAndGlyphs" >0.00</text>
<use href="#dispL" x="262.5" y="295"/><text x="297.5" y="315.8" font-family='"Liberation Sans",sans-serif' font-size="9.5" font-weight="bold"  fill="#22e022" text-anchor="middle" textLength="15" lengthAdjust="spacingAndGlyphs" >0.00</text>
<rect x="223" y="494" width="8" height="81.75" fill="url(#vp)" stroke="#444" stroke-width=".7"/>
<rect x="237.5" y="494" width="7.5" height="72.5" fill="url(#vp)" stroke="#444" stroke-width=".7"/>
<rect x="297.5" y="494" width="8.0" height="72.5" fill="url(#vp)" stroke="#444" stroke-width=".7"/>
<rect x="310" y="494" width="8" height="81.75" fill="url(#vp)" stroke="#444" stroke-width=".7"/>
<path d="M231 397h81l6 20h-95z" fill="url(#tankd)" stroke="#333" stroke-width=".8"/>
<rect x="223" y="417" width="95" height="77" fill="url(#tank)" stroke="#333" stroke-width=".8"/>
<path d="M223 494h95l-33 48h-27.500z" fill="url(#tankd)" stroke="#333" stroke-width=".8"/>
<path d="M257.400 423.100L290.600 425.100L282.700 440.800L293 453.500L287 472.800L268.200 485.500L265.800 475.300L251.900 469.200L249.500 454.700L256.800 443.200L253.100 436.600z" fill="#000" stroke="#cfcfcf" stroke-width="3.400" stroke-linejoin="round"/>
<rect x="192.5" y="424" width="13.5" height="26" fill="url(#vp)" stroke="#555" stroke-width=".6"/>
<rect x="185.500" y="418" width="27" height="7" fill="url(#hp)" stroke="#444" stroke-width=".7"/>
<rect x="180" y="448.75" width="37" height="15.75" fill="url(#hp)" stroke="#555" stroke-width=".6"/>
<rect x="174" y="443.750" width="7" height="25" fill="url(#hj)" stroke="#333" stroke-width=".7"/>
<rect x="216" y="443.750" width="7" height="25" fill="url(#hj)" stroke="#333" stroke-width=".7"/>
<rect x="327" y="449.7" width="19" height="14.600000000000023" fill="url(#hp)" stroke="#555" stroke-width=".6"/>
<rect x="318" y="444.300" width="9.700" height="26" fill="url(#hj)" stroke="#333" stroke-width=".7"/>
<rect x="345" y="445" width="7" height="24.700" fill="url(#hj)" stroke="#333" stroke-width=".7"/>
<rect x="352" y="450.300" width="34" height="14" fill="url(#valve)" stroke="#333" stroke-width=".7"/>
<rect x="386" y="445" width="7.700" height="24.700" fill="url(#hj)" stroke="#333" stroke-width=".7"/>
<rect x="363.7" y="437" width="6.0" height="14" fill="url(#vp)" stroke="#555" stroke-width=".6"/>
<rect x="353" y="433" width="27" height="4.700" fill="url(#hj)" stroke="#333" stroke-width=".7"/>
<path d="M152 429.500L174 452M152 479.500L174 460M152 452.500H174M152 458.500H174" stroke="#666" stroke-width=".8" fill="none"/>
<path d="M153 438v9M156 440l-3 3 3 3M153 466v9M156 468l-3 3 3 3" stroke="#2b50e8" stroke-width="1.200" fill="none"/>
<text x="213.5" y="594" font-family='"Liberation Serif",serif' font-size="19.5" font-weight="bold"  fill="#27a3e6" text-anchor="start" textLength="48.5" lengthAdjust="spacingAndGlyphs" >Pump</text>
<path d="M555.500 394H597.600L692 445" fill="none" stroke="#f01010" stroke-width="2.300"/>
<path d="M299 330.500L271.700 362.500V437.500" fill="none" stroke="#f01010" stroke-width="2.300"/>
<circle cx="700" cy="455.2" r="12" fill="none" stroke="#f01010" stroke-width="2.200"/><path d="M697.5 452.7l5 5M702.5 452.7l-5 5" stroke="#444" stroke-width=".9"/><text x="701" y="463.2" font-family='"Liberation Serif",serif' font-size="8"   fill="#e00000" text-anchor="start" >1</text>
<circle cx="272" cy="450.500" r="12.500" fill="none" stroke="#f01010" stroke-width="2.300"/><path d="M270 448l5 5M275 448l-5 5" stroke="#bbb" stroke-width="1.300"/><text x="273.5" y="459" font-family='"Liberation Serif",serif' font-size="8"   fill="#e00000" text-anchor="start" >1</text></g></svg>
<div style="position:absolute;left:842px;top:80px;width:13px;height:526px;background:linear-gradient(90deg,#e3e7ee,#f4f5f8 60%,#eef0f4)"></div>
<div style="position:absolute;left:843px;top:93px;width:11px;height:369px;border:1px solid #b5bcc8;box-sizing:border-box;border-radius:2px;background:linear-gradient(90deg,#fcfcfd,#e8eaef 50%,#d4d8e0)"></div>
<div style="position:absolute;left:846px;top:280px;width:5px;height:1px;background:#7f8898;box-shadow:0 2px 0 #7f8898,0 4px 0 #7f8898"></div>
<svg style="position:absolute;left:846px;top:85px" width="5" height="3"><path d="M0 3h5L2.500 0z" fill="#3f4a5c"/></svg>
<svg style="position:absolute;left:846px;top:597px" width="5" height="3"><path d="M0 0h5L2.500 3z" fill="#3f4a5c"/></svg>
<div style="position:absolute;left:152px;top:606px;width:690px;height:13px;background:linear-gradient(#e3e7ee,#f4f5f8 60%,#eef0f4)"></div>
<div style="position:absolute;left:186px;top:607px;width:449px;height:11px;border:1px solid #b5bcc8;box-sizing:border-box;border-radius:2px;background:linear-gradient(#fcfcfd,#e8eaef 50%,#d4d8e0)"></div>
<div style="position:absolute;left:408px;top:610px;width:1px;height:5px;background:#7f8898;box-shadow:2px 0 0 #7f8898,4px 0 0 #7f8898"></div>
<svg style="position:absolute;left:157px;top:610px" width="3" height="5"><path d="M3 0v5L0 2.500z" fill="#3f4a5c"/></svg>
<svg style="position:absolute;left:833px;top:610px" width="3" height="5"><path d="M0 0v5L3 2.500z" fill="#3f4a5c"/></svg>
<div style="position:absolute;left:842px;top:606px;width:13px;height:13px;background:#eef0f4"></div>
<svg style="position:absolute;left:8px;top:517px" width="122" height="88" viewBox="8 517 122 88"><rect x="12" y="518.500" width="82" height="63" fill="#f7f3dd"/><g transform="translate(-5.66 509.00) scale(0.1188)"><use href="#dwg"/></g><rect x="14.3" y="521.11" width="33.86" height="19.54" fill="#fff" stroke="#9a9a9a" stroke-width=".5"/><rect x="16.68" y="522.78" width="29.64" height="16.22" fill="#16a834" stroke="#0a4a14" stroke-width=".5"/><path d="M19.97 522.78V538.99 M23.26 522.78V538.99 M26.56 522.78V538.99 M29.85 522.78V538.99 M33.14 522.78V538.99 M36.44 522.78V538.99 M39.73 522.78V538.99 M43.02 522.78V538.99 M16.68 526.02H46.32 M16.68 529.26H46.32 M16.68 532.51H46.32 M16.68 535.75H46.32" stroke="#0a5a1a" stroke-width=".55" fill="none"/><path d="M56.24 539.94 L93.54 539.94 L93.54 580.13 L41.92 580.13 L41.92 551.29 L56.24 551.29zM58.44 540.77 L58.44 551.29 L73.4 551.29 L73.4 540.77zM75.42 540.77 L75.42 551.29 L91.64 551.29 L91.64 540.77zM43.94 553.01 L43.94 578.58 L91.64 578.58 L91.64 553.01z" fill="none" stroke="#1c1c1c" stroke-width=".8"/><ellipse cx="59.96" cy="563.44" rx="3.100" ry="2.600" fill="#1a1a1a"/><path d="M58.46 563.1400000000001l1.500 .9 1.500-.9" stroke="#ddd" stroke-width=".5" fill="none"/><rect x="58.76" y="560.1400000000001" width="2.400" height="1" fill="#555"/><ellipse cx="76.91" cy="557.59" rx="3.100" ry="2.600" fill="#1a1a1a"/><path d="M75.41 557.2900000000001l1.500 .9 1.500-.9" stroke="#ddd" stroke-width=".5" fill="none"/><rect x="75.71" y="554.2900000000001" width="2.400" height="1" fill="#555"/><ellipse cx="69.52" cy="563.44" rx="3.100" ry="2.600" fill="#1a1a1a"/><path d="M68.02 563.1400000000001l1.500 .9 1.500-.9" stroke="#ddd" stroke-width=".5" fill="none"/><rect x="68.32" y="560.1400000000001" width="2.400" height="1" fill="#555"/><ellipse cx="86.89" cy="563.35" rx="3.100" ry="2.600" fill="#1a1a1a"/><path d="M85.39 563.0500000000001l1.500 .9 1.500-.9" stroke="#ddd" stroke-width=".5" fill="none"/><rect x="85.69" y="560.0500000000001" width="2.400" height="1" fill="#555"/><ellipse cx="79.74" cy="571.19" rx="3.100" ry="2.600" fill="#1a1a1a"/><path d="M78.24 570.8900000000001l1.500 .9 1.500-.9" stroke="#ddd" stroke-width=".5" fill="none"/><rect x="78.53999999999999" y="567.8900000000001" width="2.400" height="1" fill="#555"/><ellipse cx="50.06" cy="571.13" rx="3.100" ry="2.600" fill="#1a1a1a"/><path d="M48.56 570.83l1.500 .9 1.500-.9" stroke="#ddd" stroke-width=".5" fill="none"/><rect x="48.86" y="567.83" width="2.400" height="1" fill="#555"/><ellipse cx="67.7" cy="548.2" rx="3.100" ry="2.600" fill="#1a1a1a"/><path d="M66.2 547.9000000000001l1.500 .9 1.500-.9" stroke="#ddd" stroke-width=".5" fill="none"/><rect x="66.5" y="544.9000000000001" width="2.400" height="1" fill="#555"/><rect x="45.66" y="575.29" width="6.89" height="2.97" fill="#1fc43c" stroke="#0a4a14" stroke-width=".4"/><rect x="53.29" y="575.29" width="6.89" height="2.97" fill="#1fc43c" stroke="#0a4a14" stroke-width=".4"/><rect x="60.92" y="575.29" width="6.89" height="2.97" fill="#1fc43c" stroke="#0a4a14" stroke-width=".4"/><rect x="68.54" y="575.29" width="6.89" height="2.97" fill="#1fc43c" stroke="#0a4a14" stroke-width=".4"/><rect x="76.17" y="575.29" width="6.89" height="2.97" fill="#1fc43c" stroke="#0a4a14" stroke-width=".4"/><rect x="83.8" y="575.29" width="6.89" height="2.97" fill="#1fc43c" stroke="#0a4a14" stroke-width=".4"/><rect x="56.47" y="531.03" width="7.6" height="3.45" fill="#1fc43c" stroke="#0a3a10" stroke-width=".5"/><rect x="52.26" y="554.02" width="7.6" height="3.45" fill="#1fc43c" stroke="#0a3a10" stroke-width=".5"/><rect x="25.88" y="544.4" width="7.6" height="3.45" fill="#1fc43c" stroke="#0a3a10" stroke-width=".5"/><rect x="79.05" y="540.83" width="5.46" height="10.22" fill="#2a2a2a" opacity=".75"/><circle cx="81.72" cy="546.18" r="1.700" fill="#eee" stroke="#f01010" stroke-width=".8"/><circle cx="77.5" cy="563.05" r="1.500" fill="none" stroke="#f01010" stroke-width=".8"/><circle cx="26.66" cy="562.52" r="1.600" fill="#111" stroke="#f01010" stroke-width=".8"/><path d="M20.83 558.54V567.68M32.12 558.54V567.68" stroke="#333" stroke-width=".7"/><path d="M10.300 518.300H127.700V602.700H10.300zM76.500 518.300V602.700" fill="none" stroke="#2a2ae0" stroke-width="1.200" stroke-dasharray="2 2"/><path d="M15.500 519H91.500M13 521.500V579M15.500 581.700H91.500M93.300 521.500V579" fill="none" stroke="#f01010" stroke-width="2.200"/><path d="M11.300 519h2.500M11.300 581.500h2.500M92.200 519h2.500M92.200 581.500h2.500" stroke="#f01010" stroke-width="2.400" fill="none"/></svg>
<div style="position:absolute;left:6px;top:619px;width:888px;height:22px;background:linear-gradient(90deg,#c4d9f5,#cbddf6 70%,#edf2fb)"></div>
<div style="position:absolute;left:6px;top:620px;width:621px;height:20px;background:linear-gradient(#dfeafa,#d2e2f8 45%,#c3d8f5 55%,#bfd5f3);border-radius:0 3px 3px 0;border-bottom:1px solid #a3bbdc;"></div>
<div style="position:absolute;left:621px;top:622px;width:5px;height:18px;background:linear-gradient(#dde3ec,#b4bbc6 50%,#878e99);border-radius:0 3px 3px 0;"></div>
<div style="position:absolute;left:628px;top:620px;width:266px;height:20px;background:linear-gradient(#dfeafa,#d2e2f8 45%,#c3d8f5 55%,#bfd5f3);border-radius:0 3px 3px 0;border-bottom:1px solid #a3bbdc;"></div>
<div style="position:absolute;left:888px;top:622px;width:6px;height:18px;background:linear-gradient(#dde3ec,#b4bbc6 50%,#878e99);border-radius:0 3px 3px 0;"></div>
<div style="position:absolute;left:9px;top:624px;width:3px;height:13px;"><i style="position:absolute;left:0;top:0px;width:2px;height:2px;background:#8c9db8;box-shadow:.5px .5px 0 rgba(255,255,255,.6)"></i><i style="position:absolute;left:0;top:3px;width:2px;height:2px;background:#8c9db8;box-shadow:.5px .5px 0 rgba(255,255,255,.6)"></i><i style="position:absolute;left:0;top:6px;width:2px;height:2px;background:#8c9db8;box-shadow:.5px .5px 0 rgba(255,255,255,.6)"></i><i style="position:absolute;left:0;top:9px;width:2px;height:2px;background:#8c9db8;box-shadow:.5px .5px 0 rgba(255,255,255,.6)"></i></div>
<div style="position:absolute;left:630px;top:624px;width:3px;height:13px;"><i style="position:absolute;left:0;top:0px;width:2px;height:2px;background:#8c9db8;box-shadow:.5px .5px 0 rgba(255,255,255,.6)"></i><i style="position:absolute;left:0;top:3px;width:2px;height:2px;background:#8c9db8;box-shadow:.5px .5px 0 rgba(255,255,255,.6)"></i><i style="position:absolute;left:0;top:6px;width:2px;height:2px;background:#8c9db8;box-shadow:.5px .5px 0 rgba(255,255,255,.6)"></i><i style="position:absolute;left:0;top:9px;width:2px;height:2px;background:#8c9db8;box-shadow:.5px .5px 0 rgba(255,255,255,.6)"></i></div>
<div style="position:absolute;left:6px;top:641px;width:888px;height:16px;background:linear-gradient(90deg,#b7d1f5,#c9dcf6 35%,#e3ebf8 65%,#f4f6fb 90%);border-top:1px solid #a9bfe0;box-sizing:border-box"></div>
<div style="position:absolute;left:6px;top:642px;width:888px;height:6px;background:linear-gradient(rgba(255,255,255,.45),rgba(255,255,255,0))"></div>
<span style='position:absolute;left:8px;top:642.9px;font:11px/13.2px "Liberation Sans",sans-serif;color:#15203a;white-space:nowrap;transform-origin:0 50%;transform:scale(0.8177,1);'>Ready</span>
<div style="position:absolute;left:445px;top:643px;width:173px;height:13px;background:rgba(255,255,255,.45);border:1px solid #a4adbd;border-right-color:#fff;border-bottom-color:#fff;box-sizing:border-box"></div>
<div style="position:absolute;left:620.5px;top:643px;width:181px;height:13px;background:rgba(255,255,255,.45);border:1px solid #a4adbd;border-right-color:#fff;border-bottom-color:#fff;box-sizing:border-box"></div>
<div style="position:absolute;left:803px;top:643px;width:21px;height:13px;background:rgba(255,255,255,.45);border:1px solid #a4adbd;border-right-color:#fff;border-bottom-color:#fff;box-sizing:border-box"></div>
<div style="position:absolute;left:826.5px;top:643px;width:25.5px;height:13px;background:rgba(255,255,255,.45);border:1px solid #a4adbd;border-right-color:#fff;border-bottom-color:#fff;box-sizing:border-box"></div>
<div style="position:absolute;left:854px;top:643px;width:25px;height:13px;background:rgba(255,255,255,.45);border:1px solid #a4adbd;border-right-color:#fff;border-bottom-color:#fff;box-sizing:border-box"></div>
<span style='position:absolute;left:448px;top:643.2px;font:10.5px/12.6px "Liberation Sans",sans-serif;color:#15203a;white-space:nowrap;transform-origin:0 50%;transform:scale(0.8419,1);'>(Pos:1.06cm,0.74cm)</span>
<span style='position:absolute;left:625px;top:643.2px;font:10.5px/12.6px "Liberation Sans",sans-serif;color:#15203a;white-space:nowrap;transform-origin:0 50%;transform:scale(0.8739,1);'>(W X H:10.24cm,5.93cm)</span>
<span style='position:absolute;left:828.5px;top:643.2px;font:10.5px/12.6px "Liberation Sans",sans-serif;color:#15203a;white-space:nowrap;transform-origin:0 50%;transform:scale(0.8573,1);'>NUM</span>
<svg style="position:absolute;left:883px;top:646px" width="11" height="11"><path d="M10.500 2.500L2.500 10.500M10.500 6.500L6.500 10.500" stroke="#9aa2b0" stroke-width="1.300"/><path d="M10.500 3.800L3.800 10.500M10.500 7.800L7.800 10.500" stroke="#fff" stroke-width="1"/></svg>
<svg style="position:absolute;left:0;top:0" width="900" height="662" viewBox="0 0 900 662"><g transform="translate(22.5 47) scale(0.92)"><path d="M-5.500-6h10.500v9.500l-2.500 2.500h-8z" fill="#fff" stroke="#2b2b2b" stroke-width="1.300"/><path d="M-3.500-3.500h6.500M-3.500-1.500h6.500M-3.500.5h6.500M-3.500 2.500h4" stroke="#777" stroke-width=".9"/><path d="M2.500 6v-2.500h2.500" fill="none" stroke="#2b2b2b" stroke-width="1"/></g><path d="M32.7 45.8h4.600l-2.300 2.600z" fill="#111"/><g transform="translate(48.5 47) scale(0.92)"><path d="M-6 5.500v-9.500h3l1.500-1.500h3.500v2h3v2" fill="#b9b9a8" stroke="#2b2b2b" stroke-width="1.200"/><path d="M-6 5.500l3-6.500h10l-3 6.500z" fill="#8c8c7a" stroke="#2b2b2b" stroke-width="1.200"/></g><path d="M57.7 45.8h4.600l-2.300 2.600z" fill="#111"/><g transform="translate(73.5 47) scale(0.92)"><rect x="-5.500" y="-5.500" width="11" height="11" rx="1" fill="#3a3a3a" stroke="#1a1a1a" stroke-width="1"/><rect x="-3.200" y="-5" width="6.400" height="4" fill="#6a6a6a"/><rect x="-3.500" y="1" width="7" height="4.500" fill="#fff"/></g><g transform="translate(91 47) scale(0.92)"><path d="M-4-1.500h5.500a3 3 0 0 1 0 6h-2" fill="none" stroke="#a9b4c4" stroke-width="1.600"/><path d="M-5.500-1.500l3.500-3v6z" fill="#a9b4c4"/></g><path d="M100.7 45.8h4.600l-2.300 2.600z" fill="#a9b4c4"/><g transform="translate(116 47) scale(0.92)"><path d="M4-1.500h-5.500a3 3 0 0 0 0 6h2" fill="none" stroke="#a9b4c4" stroke-width="1.600"/><path d="M5.500-1.500l-3.500-3v6z" fill="#a9b4c4"/></g><path d="M125.7 45.8h4.600l-2.300 2.600z" fill="#a9b4c4"/><g transform="translate(142 47) scale(0.92)"><path d="M-2.500-6.500l4 9M2.500-6.500l-4 9" stroke="#111" stroke-width="1.400" fill="none"/><circle cx="-2.500" cy="4" r="2" fill="none" stroke="#1a2fb0" stroke-width="1.400"/><circle cx="2.500" cy="4" r="2" fill="none" stroke="#1a2fb0" stroke-width="1.400"/></g><g transform="translate(159 47) scale(0.92)"><path d="M-5.500-5.500h5l2 2v5.500h-7z" fill="#ddd" stroke="#555" stroke-width="1"/><path d="M-1-1h5l2 2v6h-7z" fill="#f4f4f4" stroke="#1a2fb0" stroke-width="1.100"/><path d="M.5 2h3.500M.5 4h3.500" stroke="#667" stroke-width=".8"/></g><g transform="translate(176.5 47) scale(0.92)"><rect x="-6" y="-5" width="10.500" height="10.500" rx="1" fill="#a97a3a" stroke="#4a3210" stroke-width="1"/><rect x="-3" y="-6.500" width="4.500" height="3" fill="#777" stroke="#333" stroke-width=".7"/><path d="M-.5-.5h5l2 2v5h-7z" fill="#e8e8f4" stroke="#1a2fb0" stroke-width="1"/></g><rect x="185.0" y="39.0" width="16" height="16" fill="#e3effc" stroke="#4aa5ec" stroke-width="1.200"/><g transform="translate(193 47) scale(0.92)"><rect x="-5.500" y="-5" width="11" height="10" fill="#fff" stroke="#222" stroke-width="1.200"/><path d="M-5.500-3.200h11" stroke="#1a2fb0" stroke-width="2"/><path d="M-2-3v8" stroke="#222" stroke-width="1"/><path d="M-.5 0h3l1-1h3v6.500h-7z" fill="#f2e676" stroke="#8a7a20" stroke-width=".8"/></g><g transform="translate(209.5 47) scale(0.92)"><path d="M-5.500 4v-9h3.500l1 1.500h4v2" fill="#6a6a5a" stroke="#222" stroke-width="1"/><path d="M-5.500 4.500l3-5h9.500l-3.500 5z" fill="#e32222" stroke="#7a1010" stroke-width=".9"/><path d="M3-6l3 0M6-6v3" stroke="#222" stroke-width="1"/></g><g transform="translate(225.5 47) scale(0.92)"><rect x="-4.0" y="-5.0" width="8" height="11" fill="#18a838" stroke="#0b5a1c" stroke-width=".9"/><rect x="-2.80" y="-3.80" width="2.40" height="2.27" fill="#e4fbe4"/><rect x="-2.80" y="-0.63" width="2.40" height="2.27" fill="#e4fbe4"/><rect x="-2.80" y="2.53" width="2.40" height="2.27" fill="#e4fbe4"/><rect x="0.40" y="-3.80" width="2.40" height="2.27" fill="#e4fbe4"/><rect x="0.40" y="-0.63" width="2.40" height="2.27" fill="#e4fbe4"/><rect x="0.40" y="2.53" width="2.40" height="2.27" fill="#e4fbe4"/><path d="M-6.500-6.500l2.500 2.500M-4-6.500l-2.500 2.500" stroke="#e81818" stroke-width="1"/></g><g transform="translate(243 47) scale(0.92)"><rect x="-2.0" y="-6.0" width="8" height="9" fill="#18a838" stroke="#0b5a1c" stroke-width=".9"/><rect x="-0.80" y="-4.80" width="2.40" height="1.60" fill="#e4fbe4"/><rect x="-0.80" y="-2.30" width="2.40" height="1.60" fill="#e4fbe4"/><rect x="-0.80" y="0.20" width="2.40" height="1.60" fill="#e4fbe4"/><rect x="2.40" y="-4.80" width="2.40" height="1.60" fill="#e4fbe4"/><rect x="2.40" y="-2.30" width="2.40" height="1.60" fill="#e4fbe4"/><rect x="2.40" y="0.20" width="2.40" height="1.60" fill="#e4fbe4"/><path d="M-6.500 5v-7h3l1 1h3" fill="#c9b400" stroke="#222" stroke-width=".9"/><path d="M-6.500 5.500l2.500-4.500h8.500l-2.500 4.500z" fill="#f4e21a" stroke="#222" stroke-width=".9"/></g><g transform="translate(259.5 47) scale(0.92)"><rect x="-5.5" y="-5.5" width="8" height="9" fill="#18a838" stroke="#0b5a1c" stroke-width=".9"/><rect x="-4.30" y="-4.30" width="2.40" height="1.60" fill="#e4fbe4"/><rect x="-4.30" y="-1.80" width="2.40" height="1.60" fill="#e4fbe4"/><rect x="-4.30" y="0.70" width="2.40" height="1.60" fill="#e4fbe4"/><rect x="-1.10" y="-4.30" width="2.40" height="1.60" fill="#e4fbe4"/><rect x="-1.10" y="-1.80" width="2.40" height="1.60" fill="#e4fbe4"/><rect x="-1.10" y="0.70" width="2.40" height="1.60" fill="#e4fbe4"/><path d="M1 1.500l5.500 5M6.500 1.500l-5.500 5" stroke="#e81818" stroke-width="1.400"/></g><g transform="translate(277 47) scale(0.92)"><rect x="-6.0" y="-6.0" width="8" height="9" fill="#18a838" stroke="#0b5a1c" stroke-width=".9"/><rect x="-4.80" y="-4.80" width="2.40" height="1.60" fill="#e4fbe4"/><rect x="-4.80" y="-2.30" width="2.40" height="1.60" fill="#e4fbe4"/><rect x="-4.80" y="0.20" width="2.40" height="1.60" fill="#e4fbe4"/><rect x="-1.60" y="-4.80" width="2.40" height="1.60" fill="#e4fbe4"/><rect x="-1.60" y="-2.30" width="2.40" height="1.60" fill="#e4fbe4"/><rect x="-1.60" y="0.20" width="2.40" height="1.60" fill="#e4fbe4"/><rect x="-1" y="-.5" width="7.500" height="7" fill="#333" stroke="#111" stroke-width=".8"/><rect x="1" y="3.200" width="3.500" height="3" fill="#fff"/><rect x="1" y="0" width="3.500" height="2" fill="#888"/></g><g transform="translate(294.5 47) scale(0.92)"><rect x="-5.500" y="-5" width="11" height="10" fill="#1c6ed8" stroke="#9cc8f4" stroke-width="1"/><path d="M-3.500-2.500q2 3 4.500 1.500l2.500-2.500v3.500q-2.500 4-7.500 3z" fill="#5cc8f8"/><path d="M-4 6.500h8" stroke="#49a" stroke-width="1"/></g><g transform="translate(311 47) scale(0.92)"><path d="M-3.500-1.500l1.500-4h6.500l-1.500 4" fill="#fff" stroke="#2b2b2b" stroke-width="1.100"/><rect x="-6" y="-1.500" width="12" height="6" rx="2" fill="#f0f0f0" stroke="#2b2b2b" stroke-width="1.200"/><path d="M-3.500 2h7" stroke="#2b2b2b" stroke-width="1"/></g><g transform="translate(328 47) scale(0.92)"><path d="M-3.500-1.500l1.500-4h6.500l-1.500 4" fill="#fff" stroke="#2b2b2b" stroke-width="1.100"/><rect x="-6" y="-1.500" width="12" height="6" rx="2" fill="#f0f0f0" stroke="#2b2b2b" stroke-width="1.200"/><path d="M-2 -3.500h4" stroke="#1a2fb0" stroke-width="1"/><path d="M-3.500 2.500h7" stroke="#2b2b2b" stroke-width="1"/><rect x="3" y="-1" width="2" height="1.500" fill="#e81818"/></g><g transform="translate(344 47) scale(0.92)"><rect x="-6" y="-6" width="12" height="12" fill="#eef2f8"/><rect x="-5.0" y="-4.5" width="2.500" height="2.500" fill="#e82a2a"/><rect x="-5.0" y="-1.0" width="2.500" height="2.500" fill="#2a9a2a"/><rect x="-5.0" y="2.5" width="2.500" height="2.500" fill="#e8a02a"/><rect x="-1.2999999999999998" y="-4.5" width="2.500" height="2.500" fill="#2a9a2a"/><rect x="-1.2999999999999998" y="-1.0" width="2.500" height="2.500" fill="#e8a02a"/><rect x="-1.2999999999999998" y="2.5" width="2.500" height="2.500" fill="#e82a2a"/><rect x="2.4000000000000004" y="-4.5" width="2.500" height="2.500" fill="#e8a02a"/><rect x="2.4000000000000004" y="-1.0" width="2.500" height="2.500" fill="#e82a2a"/><rect x="2.4000000000000004" y="2.5" width="2.500" height="2.500" fill="#2a9a2a"/><path d="M-5.500 6.500h11" stroke="#49a" stroke-width="1"/></g><text x="361" y="51.3" font-family='"Liberation Sans",sans-serif' font-size="13" font-weight="bold" text-anchor="middle" fill="#f0d81a" stroke="#4a4210" stroke-width=".9">?</text><rect x="384.5" y="39.0" width="16" height="16" fill="#e3effc" stroke="#4aa5ec" stroke-width="1.200"/><g transform="translate(392.5 47) scale(0.92)"><path d="M-5-6.500l11 6.500-11 6.500z" fill="#14d214" stroke="#0a5a0a" stroke-width="1"/></g><g transform="translate(410 47) scale(0.92)"><rect x="-5.5" y="-5.5" width="1.600" height="1.600" fill="#1a2fb0"/><rect x="-5.5" y="-2.5" width="1.600" height="1.600" fill="#1a2fb0"/><rect x="-5.5" y="0.5" width="1.600" height="1.600" fill="#1a2fb0"/><rect x="-5.5" y="3.5" width="1.600" height="1.600" fill="#1a2fb0"/><rect x="-2.5" y="-5.5" width="1.600" height="1.600" fill="#1a2fb0"/><rect x="-2.5" y="-2.5" width="1.600" height="1.600" fill="#1a2fb0"/><rect x="-2.5" y="0.5" width="1.600" height="1.600" fill="#1a2fb0"/><rect x="-2.5" y="3.5" width="1.600" height="1.600" fill="#1a2fb0"/><rect x="0.5" y="-5.5" width="1.600" height="1.600" fill="#1a2fb0"/><rect x="0.5" y="-2.5" width="1.600" height="1.600" fill="#1a2fb0"/><rect x="0.5" y="0.5" width="1.600" height="1.600" fill="#1a2fb0"/><rect x="0.5" y="3.5" width="1.600" height="1.600" fill="#1a2fb0"/><rect x="3.5" y="-5.5" width="1.600" height="1.600" fill="#1a2fb0"/><rect x="3.5" y="-2.5" width="1.600" height="1.600" fill="#1a2fb0"/><rect x="3.5" y="0.5" width="1.600" height="1.600" fill="#1a2fb0"/><rect x="3.5" y="3.5" width="1.600" height="1.600" fill="#1a2fb0"/></g><rect x="419.5" y="39.0" width="15" height="16" fill="#e3effc" stroke="#4aa5ec" stroke-width="1.200"/><rect x="436.5" y="39.0" width="15" height="16" fill="#e3effc" stroke="#4aa5ec" stroke-width="1.200"/><rect x="453.5" y="39.0" width="15" height="16" fill="#e3effc" stroke="#4aa5ec" stroke-width="1.200"/><rect x="470.5" y="39.0" width="15" height="16" fill="#e3effc" stroke="#4aa5ec" stroke-width="1.200"/><rect x="487.5" y="39.0" width="15" height="16" fill="#e3effc" stroke="#4aa5ec" stroke-width="1.200"/><rect x="504.5" y="39.0" width="15" height="16" fill="#e3effc" stroke="#4aa5ec" stroke-width="1.200"/><rect x="521.5" y="39.0" width="15" height="16" fill="#e3effc" stroke="#4aa5ec" stroke-width="1.200"/><rect x="538.0" y="39.0" width="15" height="16" fill="#e3effc" stroke="#4aa5ec" stroke-width="1.200"/><rect x="555.0" y="39.0" width="15" height="16" fill="#e3effc" stroke="#4aa5ec" stroke-width="1.200"/><rect x="571.5" y="39.0" width="15" height="16" fill="#e3effc" stroke="#4aa5ec" stroke-width="1.200"/><rect x="588.5" y="39.0" width="15" height="16" fill="#e3effc" stroke="#4aa5ec" stroke-width="1.200"/><g transform="translate(427 47) scale(0.92)"><path d="M-1-6.500v13M-6.500 2h13" stroke="#1a2fb0" stroke-width="1" stroke-dasharray="2 1"/></g><g transform="translate(444 47) scale(0.92)"><path d="M-4.500-4h4l5 3.500v5h-9z" fill="none" stroke="#111" stroke-width="1.300"/><g fill="#111"><rect x="-5.500" y="-5" width="2.200" height="2.200"/><rect x="-1.500" y="-5" width="2.200" height="2.200"/><rect x="3.500" y="-1.500" width="2.200" height="2.200"/><rect x="3.500" y="3.500" width="2.200" height="2.200"/><rect x="-5.500" y="3.500" width="2.200" height="2.200"/></g></g><g transform="translate(461 47) scale(0.92)"><path d="M-2.500-6v12M2.500-6v12M-6-2.500h12M-6 2.500h12" stroke="#1a2fb0" stroke-width="1.700"/><path d="M-6 0h2M4 0h2" stroke="#47f" stroke-width="1"/></g><g transform="translate(478 47) scale(0.92)"><path d="M-5.500-5.500h11M-3.500-5.500v11" stroke="#1a2fb0" stroke-width="1.200"/><rect x="-.5" y="-.5" width="5.500" height="5.500" fill="#fff" stroke="#222" stroke-width="1.200"/><rect x="-2.500" y="-3.500" width="1.500" height="1.500" fill="#888"/></g><g transform="translate(495 47) scale(0.92)"><path d="M-6 0h12M0-6v12" stroke="#e81818" stroke-width="1" stroke-dasharray="1.500 1"/><path d="M-3.500-5l2 2M3.500-5l-2 2M2 4h3M3 5.500h2" stroke="#333" stroke-width="1"/></g><g transform="translate(512 47) scale(0.92)"><path d="M-6-6l11 11" stroke="#3a7ac8" stroke-width="1"/><path d="M-2.500 5.500v-6.500h7.500v6.500" fill="none" stroke="#222" stroke-width="1.300"/></g><g transform="translate(529 47) scale(0.92)"><rect x="-4.500" y="-4.500" width="9" height="9" fill="none" stroke="#111" stroke-width="1.300"/><rect x="-5.6" y="-5.6" width="2.200" height="2.200" fill="#e81818"/><rect x="-5.6" y="-1.1" width="2.200" height="2.200" fill="#e81818"/><rect x="-5.6" y="3.4" width="2.200" height="2.200" fill="#e81818"/><rect x="-1.1" y="-5.6" width="2.200" height="2.200" fill="#e81818"/><rect x="-1.1" y="3.4" width="2.200" height="2.200" fill="#e81818"/><rect x="3.4" y="-5.6" width="2.200" height="2.200" fill="#e81818"/><rect x="3.4" y="-1.1" width="2.200" height="2.200" fill="#e81818"/><rect x="3.4" y="3.4" width="2.200" height="2.200" fill="#e81818"/></g><g transform="translate(545 47) scale(0.92)"><path d="M0-5l5 9.500h-10z" fill="none" stroke="#111" stroke-width="1.300"/><g fill="#e81818"><circle cx="0" cy="-5" r="1.300"/><circle cx="5" cy="4.500" r="1.300"/><circle cx="-5" cy="4.500" r="1.300"/></g></g><g transform="translate(562 47) scale(0.92)"><rect x="-5.500" y="-5" width="6" height="6.500" fill="#fff" stroke="#111" stroke-width="1.200"/><path d="M.5-1.500l4-2.500M2.500 2.500h3v3" fill="none" stroke="#111" stroke-width="1"/><rect x="1" y="1" width="2" height="2" fill="#e81818"/></g><g transform="translate(579 47) scale(0.92)"><rect x="-4.500" y="-4.500" width="9" height="9" fill="none" stroke="#1a2fb0" stroke-width="1.400"/><path d="M-6-4.500h12M-6 4.500h12M-4.500-6v12M4.500-6v12" stroke="#1a2fb0" stroke-width=".8"/></g><g transform="translate(596 47) scale(0.92)"><circle r="4.200" fill="none" stroke="#2038e0" stroke-width="3"/><path d="M-6 0h12M0-6v12" stroke="#111" stroke-width=".8" stroke-dasharray="2.500 7"/><circle r="1.800" fill="#fff"/></g><g transform="translate(612 47) scale(0.92)"><circle cx="-.5" cy="-.5" r="4" fill="#fff" stroke="#1a2fb0" stroke-width="1.200"/><path d="M-.5-.5l2.500 2.500" stroke="#e81818" stroke-width="1"/><circle cx="-.5" cy="-.5" r=".9" fill="#e81818"/><path d="M2.500 2.500l2.500 2.500" stroke="#333" stroke-width="1.300"/></g><g transform="translate(629.5 47) scale(0.92)"><path d="M-3 6.500l-2.500-4.500v-2.500l2 1.500v-5q1-1 1.500 0v-1.500q1-1 1.500 0v1q1-1 1.500 0v1.500q1-1 1.500 0v6.500l-1.500 3z" fill="#fff" stroke="#1a2fb0" stroke-width="1"/></g><g transform="translate(645.5 47) scale(0.92)"><rect x="-5.500" y="-5.500" width="6.500" height="8" fill="#fff" stroke="#111" stroke-width="1.200"/><path d="M1-2.500l0 8 2-2 1.500 3 1.500-.8-1.500-2.800h2.500z" fill="#fff" stroke="#111" stroke-width=".9"/><rect x="-.5" y="4" width="2" height="2" fill="#e81818"/></g><g transform="translate(662.5 47) scale(0.92)"><path d="M-5-2.500h10M-5 2.500h10M-2.500-5v10M2.500-5v10" stroke="#a9b4c4" stroke-width="1.200"/><rect x="-1" y="-4" width="5" height="5" fill="#a9b4c4"/></g><g transform="translate(679 47) scale(0.92)"><path d="M-3.500-5.500h7M-3.500 5.500h7M0-5.500v11" stroke="#a9b4c4" stroke-width="1.300"/><rect x="-3.500" y="-5.500" width="7" height="3.500" fill="none" stroke="#a9b4c4" stroke-width="1"/><rect x="-3.500" y="2" width="7" height="3.500" fill="none" stroke="#a9b4c4" stroke-width="1"/></g><g transform="translate(696.5 47) scale(0.92)"><rect x="-5.500" y="-2.500" width="9" height="8" rx="1" fill="#9a9a9a" stroke="#222" stroke-width="1.100"/><rect x="-3.500" y="0" width="5" height="3" fill="#ddd" stroke="#333" stroke-width=".6"/><path d="M-2-3l3-3.500h5v3.500l-3 1z" fill="#f0e040" stroke="#444" stroke-width=".8"/><path d="M6.500-6v4" stroke="#1a2fb0" stroke-width="1.300"/></g><g transform="translate(713.5 47) scale(0.92)"><path d="M-6 1l6-4 5.500 4-6 4z" fill="#444" stroke="#111" stroke-width="1"/><path d="M-4 3l7 3" stroke="#ddd" stroke-width="1.300"/><path d="M-1.500-3l3-3.500h5v3.500l-3 1z" fill="#f0e040" stroke="#444" stroke-width=".8"/><path d="M6.500-6v4" stroke="#1a2fb0" stroke-width="1.300"/></g><g transform="translate(729.5 47) scale(0.92)"><circle cx="-1" cy="-1.500" r="4.300" fill="#fff" stroke="#1a2fb0" stroke-width="1.400"/><path d="M2 2l4 4.500" stroke="#1a2fb0" stroke-width="2"/><path d="M-3-1.500h4" stroke="#1a2fb0" stroke-width="1.400"/></g><g transform="translate(746.5 47) scale(0.92)"><circle cx="-1" cy="-1.500" r="4.300" fill="#fff" stroke="#1a2fb0" stroke-width="1.400"/><path d="M2 2l4 4.500" stroke="#1a2fb0" stroke-width="2"/><path d="M-3-1.500h4M-1-3.500v4" stroke="#1a2fb0" stroke-width="1.400"/></g><rect x="800.5" y="39.0" width="16" height="16" fill="#e3effc" stroke="#4aa5ec" stroke-width="1.200"/><g transform="translate(808.5 47) scale(0.92)"><circle cx="-1" cy="-1.500" r="4.300" fill="#fff" stroke="#1a2fb0" stroke-width="1.400"/><path d="M2 2l4 4.500" stroke="#1a2fb0" stroke-width="2"/><text x="-1" y=".5" font-size="5" font-family='"Liberation Sans",sans-serif' text-anchor="middle" fill="#1a2fb0">1:1</text></g><g transform="translate(825 47) scale(0.92)"><circle cx="-1" cy="-1.500" r="4.300" fill="#fff" stroke="#1a2fb0" stroke-width="1.400"/><path d="M2 2l4 4.500" stroke="#1a2fb0" stroke-width="2"/><path d="M-3-1.500h4M-1-3.500v4" stroke="#1a2fb0" stroke-width="1.400"/><path d="M4.500 3.500h3M6 2v3" stroke="#111" stroke-width="1"/></g><g transform="translate(841.5 47) scale(0.92)"><path d="M-5.500 6v-8.500l3-3h4" fill="none" stroke="#1a2fb0" stroke-width="1.200"/><path d="M-5.500 6h9.500v-3" fill="none" stroke="#1a2fb0" stroke-width="1.200"/><circle cx="1.500" cy="-2" r="3.500" fill="#fff" stroke="#1a2fb0" stroke-width="1.100"/><path d="M4 .5l2.500 3" stroke="#1a2fb0" stroke-width="1.600"/></g><g transform="translate(859 47) scale(0.92)"><path d="M-5.500 6v-8.500l3-3h4" fill="none" stroke="#1a2fb0" stroke-width="1.200"/><path d="M-5.500 6h9.500v-3" fill="none" stroke="#1a2fb0" stroke-width="1.200"/><circle cx="1.500" cy="-2" r="3.500" fill="#fff" stroke="#1a2fb0" stroke-width="1.100"/><path d="M4 .5l2.500 3" stroke="#1a2fb0" stroke-width="1.600"/><path d="M-3 2v4M0 2v4M3 2v4" stroke="#1a2fb0" stroke-width=".9"/></g><g transform="translate(876.5 47) scale(0.92)"><path d="M-5.500 6v-8.500l3-3h4" fill="none" stroke="#1a2fb0" stroke-width="1.200"/><path d="M-5.500 6h9.500v-3" fill="none" stroke="#1a2fb0" stroke-width="1.200"/><circle cx="1.500" cy="-2" r="3.500" fill="#fff" stroke="#1a2fb0" stroke-width="1.100"/><path d="M4 .5l2.500 3" stroke="#1a2fb0" stroke-width="1.600"/><path d="M-3 3v3M-1 1v5M1 3v3M3 1v5" stroke="#1a2fb0" stroke-width=".9"/></g><text x="162.500" y="72.5" font-family='"Liberation Serif",serif' font-size="12" font-weight="bold" text-anchor="middle" fill="#111" stroke="#111" stroke-width=".4">B</text><g transform="translate(177.5 68.5) scale(0.92)"><path d="M-4 4.500h3l5.500-8.500h-3z" fill="#111"/><path d="M-5 4.500h3M2.500-4h3" stroke="#111" stroke-width="1"/></g><text x="196" y="71.5" font-family='"Liberation Serif",serif' font-size="11" font-weight="bold" text-anchor="middle" fill="#111">U</text><path d="M192 73.5h8" stroke="#111" stroke-width="1"/><g transform="translate(211 68.5) scale(0.92)"><rect x="-5" y="-4.5" width="10" height="2" fill="#3a3f4a"/><rect x="-5" y="-1.5" width="8" height="2" fill="#3a3f4a"/><rect x="-5" y="1.5" width="10" height="2" fill="#3a3f4a"/><rect x="-5" y="4.5" width="8" height="2" fill="#3a3f4a"/></g><rect x="221.5" y="60.5" width="16" height="16" fill="#e3effc" stroke="#4aa5ec" stroke-width="1.200"/><g transform="translate(229.5 68.5) scale(0.92)"><rect x="-5.0" y="-4.5" width="10" height="2" fill="#3a3f4a"/><rect x="-4.0" y="-1.5" width="8" height="2" fill="#3a3f4a"/><rect x="-5.0" y="1.5" width="10" height="2" fill="#3a3f4a"/><rect x="-4.0" y="4.5" width="8" height="2" fill="#3a3f4a"/></g><g transform="translate(246 68.5) scale(0.92)"><rect x="-5" y="-4.5" width="10" height="2" fill="#3a3f4a"/><rect x="-3" y="-1.5" width="8" height="2" fill="#3a3f4a"/><rect x="-5" y="1.5" width="10" height="2" fill="#3a3f4a"/><rect x="-3" y="4.5" width="8" height="2" fill="#3a3f4a"/></g><g transform="translate(263 66.0) scale(0.92)"><rect x="-4.5" y="-2.5" width="9" height="2" fill="#3a3f4a"/><rect x="-3.5" y="0.5" width="7" height="2" fill="#3a3f4a"/></g><rect x="273.0" y="60.5" width="16" height="16" fill="#e3effc" stroke="#4aa5ec" stroke-width="1.200"/><g transform="translate(281 68.5) scale(0.92)"><rect x="-4.0" y="-2.5" width="8" height="2" fill="#3a3f4a"/><rect x="-3.5" y="0.5" width="7" height="2" fill="#3a3f4a"/><rect x="-4.0" y="3.5" width="8" height="2" fill="#3a3f4a"/></g><g transform="translate(297 71.0) scale(0.92)"><rect x="-4.0" y="-1" width="8" height="2" fill="#3a3f4a"/><rect x="-3.5" y="2" width="7" height="2" fill="#3a3f4a"/></g><g transform="translate(313.5 68.5) scale(0.92)"><rect x="-6" y="-4.5" width="2" height="2" fill="#b9b9a9"/><path d="M-2.500 -3.5h8.500" stroke="#c4c4b8" stroke-width="1.300"/><rect x="-6" y="-1.0" width="2" height="2" fill="#b9b9a9"/><path d="M-2.500 0.0h8.500" stroke="#c4c4b8" stroke-width="1.300"/><rect x="-6" y="2.5" width="2" height="2" fill="#b9b9a9"/><path d="M-2.500 3.5h8.500" stroke="#c4c4b8" stroke-width="1.300"/></g><text x="329.500" y="74.0" font-family='"Liberation Sans",sans-serif' font-size="14" text-anchor="middle" fill="#111">A</text><path d="M334 64.0l2-2.500 2 2.500z" fill="#111"/><text x="346.500" y="73.5" font-family='"Liberation Sans",sans-serif' font-size="9.500" text-anchor="middle" fill="#111">A</text><path d="M349.500 62.5h4l-2 2.500z" fill="#111"/><text x="365" y="71.0" font-family='"Liberation Serif",serif' font-size="11.500" font-weight="bold" text-anchor="middle" fill="#1a2fb0">A</text><path d="M359 73.5h12" stroke="#0a0a5a" stroke-width="2"/><path d="M375.2 67.6h4.600l-2.300 2.600z" fill="#111"/><g transform="translate(391 68.5) scale(0.92)"><path d="M-1.500 2.500l5-7.500 2 1.500-5 7.500z" fill="#1a2fb0" stroke="#0a0a5a" stroke-width=".6"/><path d="M3.500-5l1-1.500 2 1.500-1 1.500z" fill="#e8d820"/><path d="M-5 2.500q2-1.500 3.500 0" stroke="#1a2fb0" fill="none" stroke-width="1"/><path d="M-6 5.500h12" stroke="#111" stroke-width="2"/></g><path d="M401.2 67.6h4.600l-2.300 2.600z" fill="#111"/><g transform="translate(416.5 68.5) scale(0.92)"><path d="M-3-1.500l4.500-3.500 4 4.500-4.500 4z" fill="#fff" stroke="#333" stroke-width="1"/><path d="M-1-3.500q-2.500-3 1-3.500" fill="none" stroke="#333" stroke-width="1"/><path d="M3.500-2q3.500 1 3 4.500q-2.500-1-3-4.500z" fill="#1a2fb0"/><path d="M-6 6h12" stroke="#fff" stroke-width="2"/></g><path d="M427.2 67.6h4.600l-2.300 2.600z" fill="#111"/><g transform="translate(442 68.5) scale(0.92)"><path d="M-6-4h12" stroke="#111" stroke-width="1.200"/><path d="M-6-.5h12" stroke="#111" stroke-width="2"/><path d="M-6 4h12" stroke="#111" stroke-width="3"/></g><path d="M453.2 67.6h4.600l-2.300 2.600z" fill="#111"/><g transform="translate(468 68.5) scale(0.92)"><path d="M-6-4.500h12" stroke="#333" stroke-width="1.200"/><path d="M-6-1h12" stroke="#333" stroke-width="2" stroke-dasharray="3 1.500"/><path d="M-6 2h12" stroke="#333" stroke-width="1.500" stroke-dasharray="2 1"/><path d="M-6 5h12" stroke="#333" stroke-width="1" stroke-dasharray="1 1.500"/></g><path d="M478.7 67.6h4.600l-2.300 2.600z" fill="#111"/><g transform="translate(507 68.5) scale(0.92)"><path d="M-3.500-2.500l7 5.500" stroke="#1a2fb0" stroke-width="1.200" fill="none"/><rect x="-6.0" y="-4.5" width="3" height="3" fill="#fff" stroke="#111" stroke-width="1"/><rect x="3.0" y="2.0" width="3" height="3" fill="#fff" stroke="#111" stroke-width="1"/></g><g transform="translate(524 68.5) scale(0.92)"><path d="M-3-2l6.500 5" stroke="#1a2fb0" stroke-width="1.200" fill="none"/><path transform="translate(-5.5 -4) rotate(38)" d="M0 0l4.500-2.300v4.600z" fill="#111"/><rect x="3.0" y="2.0" width="3" height="3" fill="#fff" stroke="#111" stroke-width="1"/></g><g transform="translate(541 68.5) scale(0.92)"><path d="M-3-2.500l6 5" stroke="#1a2fb0" stroke-width="1.200" fill="none"/><path transform="translate(-5.5 -4.5) rotate(40)" d="M0 0l4.500-2.300v4.600z" fill="#111"/><path transform="translate(5.5 4.5) rotate(220)" d="M0 0l4.500-2.300v4.600z" fill="#111"/></g><g transform="translate(557.5 68.5) scale(0.92)"><path d="M-3.500-2.500l7 5.500" stroke="#1a2fb0" stroke-width="1.200" fill="none"/><rect x="-6.0" y="-4.5" width="3" height="3" fill="#fff" stroke="#111" stroke-width="1"/><rect x="3.0" y="2.0" width="3" height="3" fill="#fff" stroke="#111" stroke-width="1"/></g><g transform="translate(574.5 68.5) scale(0.92)"><path d="M-3-2l6.500 5" stroke="#1a2fb0" stroke-width="1.200" fill="none"/><path transform="translate(-5.5 -4) rotate(38)" d="M0 0l4.500-2.300v4.600z" fill="#111"/><rect x="3.0" y="2.0" width="3" height="3" fill="#fff" stroke="#111" stroke-width="1"/></g><g transform="translate(591 68.5) scale(0.92)"><path d="M-3-2.500l6 5" stroke="#1a2fb0" stroke-width="1.200" fill="none"/><path transform="translate(-5.5 -4.5) rotate(40)" d="M0 0l4.500-2.300v4.600z" fill="#111"/><path transform="translate(5.5 4.5) rotate(220)" d="M0 0l4.500-2.300v4.600z" fill="#111"/></g><g transform="translate(608 68.5) scale(0.92)"><path d="M-3-3h3v6h3" stroke="#1a2fb0" stroke-width="1.200" fill="none"/><rect x="-6.0" y="-4.5" width="3" height="3" fill="#fff" stroke="#111" stroke-width="1"/><rect x="3.0" y="2.0" width="3" height="3" fill="#fff" stroke="#111" stroke-width="1"/></g><g transform="translate(625 68.5) scale(0.92)"><path d="M-2-3h2v6h2" stroke="#1a2fb0" stroke-width="1.200" fill="none"/><path transform="translate(-6 -3) rotate(0)" d="M0 0l4.500-2.300v4.600z" fill="#111"/><path transform="translate(6 3) rotate(180)" d="M0 0l4.500-2.300v4.600z" fill="#111"/></g><g transform="translate(642 68.5) scale(0.92)"><path d="M-2-3h2v6h3" stroke="#1a2fb0" stroke-width="1.200" fill="none"/><path transform="translate(-6 -3) rotate(0)" d="M0 0l4.500-2.300v4.600z" fill="#111"/><rect x="3.0" y="2.0" width="3" height="3" fill="#fff" stroke="#111" stroke-width="1"/></g><g transform="translate(659 68.5) scale(0.92)"><path d="M-3-3h4l-4 4.500h6" stroke="#1a2fb0" stroke-width="1.200" fill="none"/><rect x="-6.0" y="-5.0" width="3" height="3" fill="#fff" stroke="#111" stroke-width="1"/><rect x="3.0" y="1.5" width="3" height="3" fill="#fff" stroke="#111" stroke-width="1"/></g><g transform="translate(675.5 68.5) scale(0.92)"><path d="M-2-3h4l-4 5h5" stroke="#1a2fb0" stroke-width="1.200" fill="none"/><path transform="translate(-6 -3) rotate(0)" d="M0 0l4.500-2.300v4.600z" fill="#111"/><rect x="3.0" y="1.5" width="3" height="3" fill="#fff" stroke="#111" stroke-width="1"/></g><g transform="translate(693 68.5) scale(0.92)"><path d="M-2-3h4l-4 5h4" stroke="#1a2fb0" stroke-width="1.200" fill="none"/><path transform="translate(-6 -3) rotate(0)" d="M0 0l4.500-2.300v4.600z" fill="#111"/><path transform="translate(6 2.5) rotate(180)" d="M0 0l4.500-2.300v4.600z" fill="#111"/></g><g transform="translate(710 68.5) scale(0.92)"><path d="M-3-4.500h3v8.500h3" stroke="#1a2fb0" stroke-width="1.200" fill="none"/><rect x="-6.0" y="-6.5" width="3" height="3" fill="#fff" stroke="#111" stroke-width="1"/><rect x="3.0" y="3.0" width="3" height="3" fill="#fff" stroke="#111" stroke-width="1"/><circle cx="0" cy="0" r="1.400" fill="#1c1"/></g><g transform="translate(726.5 68.5) scale(0.92)"><path d="M-5-4l10 7" stroke="#1a2fb0" stroke-width="1.200" fill="none"/><circle cx="-5" cy="-4" r="1.400" fill="#222"/><circle cx="5.5" cy="3.5" r="1.400" fill="#222"/><circle cx="0" cy="-0.5" r="1.400" fill="#1c1"/></g><g transform="translate(744 68.5) scale(0.92)"><path d="M-5 4.500q0-8 10-9" stroke="#1a2fb0" stroke-width="1.200" fill="none"/><circle cx="-5" cy="4.5" r="1.400" fill="#222"/><circle cx="5" cy="-4.5" r="1.400" fill="#222"/><circle cx="-2.5" cy="-2" r="1.400" fill="#1c1"/></g><g transform="translate(761 68.5) scale(0.92)"><path d="M-4.500-4.500q8 0 9 9" stroke="#222" stroke-width="1.300" fill="none"/><circle cx="-4.5" cy="-4.5" r="1.400" fill="#222"/><circle cx="4.5" cy="4.5" r="1.400" fill="#222"/><circle cx="1.5" cy="-2" r="1.400" fill="#1c1"/></g><g transform="translate(777.5 68.5) scale(0.92)"><path d="M-5-5h2.500q2 0 2 3v3q0 3.500 2.500 3.500h3" stroke="#1a2fb0" stroke-width="1.200" fill="none"/><circle cx="-5" cy="-5" r="1.400" fill="#222"/><circle cx="5" cy="4.5" r="1.400" fill="#222"/><circle cx="-0.5" cy="-1.5" r="1.400" fill="#1c1"/><circle cx="1" cy="3" r="1.400" fill="#1c1"/></g><rect x="16" y="621.500" width="13.500" height="17" fill="#eef3fb" opacity=".9"/><g transform="translate(22.5 630) scale(0.92)"><path d="M-1.500-5a5 5 0 1 1-3.500 3" fill="none" stroke="#b4bcc8" stroke-width="1.600"/><path d="M-5.500-5.500l4.500-.5-1 4z" fill="#b4bcc8"/></g><g transform="translate(39 630) scale(0.92)"><path d="M-6 5.500l4.500-8h8l-4.500 8z" fill="#fff" stroke="#1a2fb0" stroke-width="1.200"/><path d="M-4.500-5.500h7" stroke="#e81818" stroke-width="1.200"/><path d="M1-7.500l2.500 2-2.500 2z" fill="#e81818"/></g><g transform="translate(56 630) scale(0.92)"><rect x="-6" y="-3" width="5" height="8.500" fill="#fff" stroke="#111" stroke-width="1.200"/><path d="M0 5.500v-5.500l4-3h2.500v4.500l-3 4z" fill="#fff" stroke="#1a2fb0" stroke-width="1.200"/><path d="M1-5q2-2.500 5-1.500" fill="none" stroke="#e81818" stroke-width="1.200"/><path d="M5-8l2.500 2-3 1.500z" fill="#e81818"/></g><g transform="translate(73.5 630) scale(0.92)"><path d="M0-6.500v13" stroke="#e8e020" stroke-width="1.800"/><path d="M-3.500-3.500a4 4 0 0 1 7 0" fill="none" stroke="#e81818" stroke-width="1.300"/><path d="M-5.500-3l1-3 2 2.500zM5.500-3l-1-3-2 2.500z" fill="#e81818"/><path d="M-5.500 0l3.500 0v5.500h-1.500zM5.500 0h-3.500v5.500h1.500z" fill="#fff" stroke="#222" stroke-width="1"/></g><g transform="translate(90 630) scale(0.92)"><path d="M-6 5.500l4.500-7v7zM0 5.500h6l-6-8.500z" fill="#e8ecf2" stroke="#b4bcc8" stroke-width="1.100"/><path d="M-1-5.500h4M2-7l2 1.500-2 1.500" fill="none" stroke="#b4bcc8" stroke-width="1.100"/></g><g transform="translate(107 630) scale(0.92)"><path d="M-6 5.500l4.500-7v7zM0 5.500h6l-6-8.500z" fill="#e8ecf2" stroke="#b4bcc8" stroke-width="1.100"/><path d="M-1-5.500h4M2-7l2 1.500-2 1.500" fill="none" stroke="#b4bcc8" stroke-width="1.100"/></g><g transform="translate(124 630) scale(0.92)"><path d="M-1 5.500h-4.500l4.500-11z" fill="#222" stroke="#111" stroke-width="1"/><path d="M1.500 5.500h4l-4-11z" fill="#fff" stroke="#1a2fb0" stroke-width="1.200"/></g><g transform="translate(141 630) scale(0.92)"><path d="M5-1.500v-4l-10 4z" fill="#888" stroke="#222" stroke-width="1"/><path d="M5 1.500v4.500l-10-4.500z" fill="#fff" stroke="#1a2fb0" stroke-width="1.200"/></g><g transform="translate(157 630) scale(0.92)"><rect x="-4" y="-4" width="8.500" height="8.500" fill="none" stroke="#b4bcc8" stroke-width="1.400"/><path d="M-6-6h2.500M-6-6v2.500M6.500-6h-2.500M6.500-6v2.500M-6 6.500h2.500M-6 6.500v-2.500" stroke="#b4bcc8" stroke-width="1.200" fill="none"/></g><g transform="translate(174 630) scale(0.92)"><rect x="-3.500" y="-3.500" width="8.500" height="8.500" fill="none" stroke="#b4bcc8" stroke-width="1.400"/><rect x="-6" y="-6" width="6" height="6" fill="none" stroke="#b4bcc8" stroke-width="1.200"/><circle cx="5" cy="5" r="1.200" fill="#b4bcc8"/></g><g transform="translate(190.5 630) scale(0.92)"><path d="M-2.500-1v-2.500a2.500 2.500 0 0 1 5 0v2.500" fill="none" stroke="#111" stroke-width="1.500"/><rect x="-4.500" y="-1" width="9" height="7" rx="1" fill="#fff" stroke="#111" stroke-width="1.300"/><path d="M0 1v3" stroke="#111" stroke-width="1.300"/></g><rect x="200.5" y="622.0" width="16" height="16" fill="#e3effc" stroke="#4aa5ec" stroke-width="1.200"/><g transform="translate(208.5 630) scale(0.92)"><path d="M-5.500-.5v-3a2.500 2.500 0 0 1 5 0v1.500" fill="none" stroke="#111" stroke-width="1.500"/><rect x="-3" y="-.5" width="8.500" height="7" rx="1" fill="#fff" stroke="#111" stroke-width="1.300"/><path d="M1.200 1.500v3" stroke="#111" stroke-width="1.300"/></g><g transform="translate(225 630) scale(0.92)"><path d="M-4.500-6v12" stroke="#b4bcc8" stroke-width="1.500"/><rect x="-2.500" y="-4.500" width="7" height="3" fill="none" stroke="#b4bcc8" stroke-width="1.100"/><rect x="-2.500" y="1" width="5" height="3" fill="none" stroke="#b4bcc8" stroke-width="1.100"/></g><g transform="translate(242 630) scale(0.92)"><path d="M-6-4.500h12" stroke="#b4bcc8" stroke-width="1.500"/><rect x="-4" y="-2.500" width="3" height="6" fill="none" stroke="#b4bcc8" stroke-width="1.100"/><rect x="1" y="-2.500" width="3" height="4" fill="none" stroke="#b4bcc8" stroke-width="1.100"/></g><g transform="translate(259 630) scale(0.92)"><path d="M-6 4.500h12" stroke="#b4bcc8" stroke-width="1.500"/><rect x="-4" y="-1" width="3" height="4" fill="none" stroke="#b4bcc8" stroke-width="1.100"/><rect x="1" y="-4" width="3" height="7" fill="none" stroke="#b4bcc8" stroke-width="1.100"/></g><g transform="translate(276 630) scale(0.92)"><path d="M4.500-6v12" stroke="#b4bcc8" stroke-width="1.500"/><rect x="-4.500" y="-4.500" width="7" height="3" fill="none" stroke="#b4bcc8" stroke-width="1.100"/><rect x="-2.500" y="1" width="5" height="3" fill="none" stroke="#b4bcc8" stroke-width="1.100"/></g><g transform="translate(292.5 630) scale(0.92)"><path d="M-6 0h12" stroke="#b4bcc8" stroke-width="1"/><rect x="-2" y="-3" width="4" height="6" fill="#e8ecf2" stroke="#b4bcc8" stroke-width="1.100"/><path d="M-5-2l-2 2 2 2" fill="none" stroke="#b4bcc8"/></g><g transform="translate(308.5 630) scale(0.92)"><path d="M0-6v12" stroke="#b4bcc8" stroke-width="1"/><rect x="-3" y="-1" width="6" height="4" fill="#e8ecf2" stroke="#b4bcc8" stroke-width="1.100"/><path d="M-2-3.500l2-2 2 2" fill="none" stroke="#b4bcc8"/></g><g transform="translate(326 630) scale(0.92)"><rect x="-6" y="-5" width="12" height="10" fill="#fff" stroke="#111" stroke-width="1.400"/><path d="M-2-5v10M2-5v10" stroke="#111" stroke-width="1.200"/><path d="M-5 0h2M5 0h-2" stroke="#1a2fb0" stroke-width="1.400"/><circle cx="-3" cy="0" r="1" fill="#1a2fb0"/><circle cx="3" cy="0" r="1" fill="#1a2fb0"/></g><g transform="translate(343 630) scale(0.92)"><rect x="-6" y="-5" width="12" height="10" fill="#fff" stroke="#111" stroke-width="1.400"/><rect x="-3.500" y="-1.500" width="7" height="3" rx="1" fill="#999" stroke="#111" stroke-width="1"/><path d="M0-4.500v2M0 4.500v-2" stroke="#1a2fb0" stroke-width="1.400"/></g><g transform="translate(360.5 630) scale(0.92)"><path d="M-5.500-5.500q2 5.500 0 11M5.500-5.500q-2 5.500 0 11M-4 0h8" fill="none" stroke="#b4bcc8" stroke-width="1.200"/><path d="M-2.500-1.500l-2 1.500 2 1.500M2.500-1.500l2 1.500-2 1.500" fill="none" stroke="#b4bcc8"/></g><g transform="translate(377.5 630) scale(0.92)"><path d="M-5.500-5.500q5.500 2 11 0M-5.500 5.500q5.500-2 11 0M0-4v8" fill="none" stroke="#b4bcc8" stroke-width="1.200"/><path d="M-1.500-2.500l1.500-2 1.500 2M-1.500 2.500l1.500 2 1.500-2" fill="none" stroke="#b4bcc8"/></g><g transform="translate(394 630) scale(0.92)"><rect x="-6" y="-3" width="12" height="6" fill="#e8ecf2" stroke="#b4bcc8" stroke-width="1.200"/><path d="M-4 0h8" stroke="#b4bcc8"/></g><g transform="translate(411 630) scale(0.92)"><rect x="-3" y="-6" width="6" height="12" fill="#e8ecf2" stroke="#b4bcc8" stroke-width="1.200"/><path d="M0-4v8" stroke="#b4bcc8"/></g><g transform="translate(428 630) scale(0.92)"><rect x="-5.500" y="-5.500" width="11" height="11" fill="#e8ecf2" stroke="#b4bcc8" stroke-width="1.200"/><path d="M-4 0h8M0-4v8" stroke="#b4bcc8"/></g><g transform="translate(445 630) scale(0.92)"><rect x="-6" y="-6" width="5" height="5" fill="#999" stroke="#222" stroke-width="1"/><rect x="1.5" y="1.5" width="5" height="5" fill="#999" stroke="#222" stroke-width="1"/><path d="M-3.500-3.500h7.500v7.500h-7.500z" fill="#fff" stroke="#222"/><path d="M-3.500-3.500h7.500l-7.500 7.500z" fill="#f8ec3a" stroke="#222" stroke-width=".6"/></g><g transform="translate(462 630) scale(0.92)"><path d="M-3.500-3.500h7.500v7.500h-7.500z" fill="#fff" stroke="#222"/><path d="M-3.500-3.500h7.500l-7.500 7.500z" fill="#f8ec3a" stroke="#222" stroke-width=".6"/><rect x="-6" y="-6" width="5" height="5" fill="#999" stroke="#222" stroke-width="1"/><rect x="1.5" y="1.5" width="5" height="5" fill="#999" stroke="#222" stroke-width="1"/></g><g transform="translate(478.5 630) scale(0.92)"><rect x="-2.5" y="-2.5" width="8" height="8" fill="#999" stroke="#222" stroke-width="1"/><path d="M-5.500-5.500h8.500v8.500h-8.500z" fill="#fff" stroke="#222"/><path d="M-5.500-5.500h8.500l-8.500 8.500z" fill="#f8ec3a" stroke="#222" stroke-width=".6"/></g><g transform="translate(495.5 630) scale(0.92)"><path d="M-5.500-5.500h8.500v8.500h-8.500z" fill="#fff" stroke="#222"/><path d="M-5.500-5.500h8.500l-8.500 8.500z" fill="#f8ec3a" stroke="#222" stroke-width=".6"/><rect x="-0.5" y="-0.5" width="6" height="6" fill="#999" stroke="#222" stroke-width="1"/></g><g transform="translate(512.5 630) scale(0.92)"><circle cx="-2.500" cy="2.500" r="3.500" fill="#0a0a6a"/><path d="M-2-5.500h7.500v7.500h-7.500z" fill="#fff" stroke="#222"/><path d="M-2-5.500h7.500l-7.500 7.500z" fill="#f8ec3a" stroke="#222" stroke-width=".6"/></g><g transform="translate(529 630) scale(0.92)"><path d="M-5.500-2h7.500v7.500h-7.500z" fill="#fff" stroke="#222"/><path d="M-5.500-2h7.500l-7.500 7.500z" fill="#f8ec3a" stroke="#222" stroke-width=".6"/><circle cx="2.500" cy="-2.500" r="3.500" fill="#0a0a6a"/></g><g transform="translate(546 630) scale(0.92)"><rect x="0" y="-6" width="6" height="5" fill="#c4c8cf"/><rect x="-5.500" y="1" width="5" height="4.500" fill="none" stroke="#b4bcc8"/><path d="M-5-2l3-3M2 5l3-3" stroke="#b4bcc8"/></g><g transform="translate(562.5 630) scale(0.92)"><rect x="-5.500" y="-3.500" width="11" height="7" fill="#fff" stroke="#111" stroke-width="1.300"/><path d="M2.500-5.500v11" stroke="#789" stroke-width="1"/><path d="M-4 0h5" stroke="#1a2fb0" stroke-width="1.400"/><circle cx="1.500" cy="0" r="1.300" fill="#1a2fb0"/></g><g transform="translate(579 630) scale(0.92)"><rect x="-5.500" y="-3.500" width="11" height="7" fill="#fff" stroke="#111" stroke-width="1.300"/><path d="M-2.500-5.500v11" stroke="#789" stroke-width="1"/><path d="M4 0h-5" stroke="#1a2fb0" stroke-width="1.400"/><circle cx="-.5" cy="0" r="1.300" fill="#1a2fb0"/></g><g transform="translate(596 630) scale(0.92)"><rect x="-3.500" y="-5.500" width="7" height="11" fill="#fff" stroke="#111" stroke-width="1.300"/><path d="M-5.500 2.500h11" stroke="#789" stroke-width="1"/><path d="M0-4v5" stroke="#1a2fb0" stroke-width="1.400"/><circle cx="0" cy="-1.500" r="1.300" fill="#1a2fb0"/></g><g transform="translate(613 630) scale(0.92)"><rect x="-3.500" y="-5.500" width="7" height="11" fill="#fff" stroke="#111" stroke-width="1.300"/><path d="M-5.500-2.500h11" stroke="#789" stroke-width="1"/><path d="M0 4v-5" stroke="#1a2fb0" stroke-width="1.400"/><circle cx="0" cy="1.500" r="1.300" fill="#1a2fb0"/></g><g transform="translate(644 630) scale(0.92)"><circle cx="-2" cy="-1.500" r="4.200" fill="#9a9fa8"/><circle cx="2" cy="1.500" r="4.200" fill="#9a9fa8"/><path d="M-1 2.500a4.200 4.200 0 0 0 2-5" fill="#e8ecf2"/></g><g transform="translate(661 630) scale(0.92)"><circle cx="-2" cy="-1.500" r="4.200" fill="#9a9fa8"/><circle cx="2" cy="1.500" r="4.200" fill="#9a9fa8"/></g><g transform="translate(678 630) scale(0.92)"><circle cx="-2" cy="-1.500" r="4.200" fill="#9a9fa8"/><circle cx="2" cy="1.500" r="4.200" fill="#9a9fa8"/><path d="M-2 2l4-4" stroke="#e8ecf2" stroke-width="2"/></g><g transform="translate(695 630) scale(0.92)"><circle cx="-2" cy="-1.500" r="4.200" fill="#eef1f6" stroke="#c8ccd4"/><circle cx="2" cy="1.500" r="4.200" fill="#eef1f6" stroke="#c8ccd4"/><path d="M-2.500 2.500l5-5" stroke="#9a9fa8" stroke-width="2.500"/></g><g transform="translate(712 630) scale(0.92)"><circle cx="-2" cy="-1.500" r="4.500" fill="#9a9fa8"/><circle cx="2.500" cy="2" r="4" fill="#eef1f6" stroke="#c8ccd4"/></g><g transform="translate(728.5 630) scale(0.92)"><path d="M3.500-4.500q-5-2-5 1.500t4 2q2 3-3.500 3" fill="none" stroke="#222" stroke-width="1.500"/><path d="M-6 2v4h3.500" fill="none" stroke="#e81818" stroke-width="1.200"/><path d="M-3.500 4.500l2.500 1.500-2.500 1.500z" fill="#e81818"/></g><g transform="translate(745.5 630) scale(0.92)"><path d="M-1.500-5h7l-3 4.500 3 4.500h-7z" fill="none" stroke="#222" stroke-width="1.400"/><path d="M-6 2v4h3" fill="none" stroke="#e81818" stroke-width="1.200"/><path d="M-3.500 4.500l2.500 1.500-2.500 1.500z" fill="#e81818"/></g><g transform="translate(762.5 630) scale(0.92)"><path d="M-5 5h10M0-5.500v8M-3-1h6" stroke="#b0b8c4" stroke-width="1.400"/><circle cx="-5" cy="5" r="1.200" fill="#b0b8c4"/><circle cx="5" cy="5" r="1.200" fill="#b0b8c4"/></g><g transform="translate(779 630) scale(0.92)"><path d="M-4-2.500h8" stroke="#b0b8c4" stroke-width="2.200"/><path d="M-5 4.500h10" stroke="#b0b8c4" stroke-width="1.300"/><circle cx="-5" cy="4.500" r="1.200" fill="#b0b8c4"/><circle cx="5" cy="4.500" r="1.200" fill="#b0b8c4"/></g><g transform="translate(796 630) scale(0.92)"><path d="M-5 5.500l10-11" stroke="#b0b8c4" stroke-width="1.300"/><path d="M0-3l4 0M2 2l3-3" stroke="#b0b8c4"/><circle cx="-5" cy="5.500" r="1.200" fill="#b0b8c4"/><circle cx="5" cy="-5.500" r="1.200" fill="#b0b8c4"/></g><g transform="translate(813.5 630) scale(0.92)"><path d="M-5 5.500q0-9 10-10" fill="none" stroke="#b0b8c4" stroke-width="1.300"/><path d="M-2 5q1-5 6-6" fill="none" stroke="#b0b8c4"/><circle cx="-5" cy="5.500" r="1.200" fill="#b0b8c4"/><circle cx="5" cy="-4.500" r="1.200" fill="#b0b8c4"/></g><g transform="translate(830 630) scale(0.92)"><path d="M-5-6v12M4.500-5v10" stroke="#b0b8c4" stroke-width="1.200"/><path d="M-4 0h3l2-2 2 2-2 2-2-2" fill="none" stroke="#b0b8c4" stroke-width="1.100"/><circle cx="4.500" cy="-2.500" r="1" fill="#b0b8c4"/><circle cx="4.500" cy="2.500" r="1" fill="#b0b8c4"/></g><g transform="translate(847 630) scale(0.92)"><path d="M5-6v12M-4.500-5v10" stroke="#b0b8c4" stroke-width="1.200"/><path d="M4 0h-3l-2-2-2 2 2 2 2-2" fill="none" stroke="#b0b8c4" stroke-width="1.100"/><circle cx="-4.500" cy="-2.500" r="1" fill="#b0b8c4"/><circle cx="-4.500" cy="2.500" r="1" fill="#b0b8c4"/></g><g transform="translate(864 630) scale(0.92)"><path d="M-2.500-5l4 8M2.500-5l-4 8" stroke="#b0b8c4" stroke-width="1.300"/><path d="M-5-5.500q5-2.500 10 0" fill="none" stroke="#b0b8c4"/><circle cx="-2.500" cy="4.500" r="1.600" fill="none" stroke="#b0b8c4"/><circle cx="2.500" cy="4.500" r="1.600" fill="none" stroke="#b0b8c4"/></g><g transform="translate(881 630) scale(0.92)"><path d="M-5 3.500a5 4.500 0 1 0 3-7" fill="none" stroke="#b0b8c4" stroke-width="1.300"/><rect x="1" y="-6.500" width="4" height="3.500" fill="#e8ecf2" stroke="#b0b8c4"/><circle cx="-5" cy="3.500" r="1.200" fill="#b0b8c4"/></g><rect x="857.5" y="89.0" width="16" height="16" fill="#e3effc" stroke="#4aa5ec" stroke-width="1.200"/><g transform="translate(865.5 97.0) scale(.88)"><path d="M-3-6.500l0 9.500 2.500-2.500h4z" fill="#fff" stroke="#111" stroke-width="1"/><path d="M0 .5l2.500 5.500" stroke="#111" stroke-width="2.200"/></g><g transform="translate(865 113.2) scale(.88)"><circle r="5" fill="none" stroke="#333" stroke-width="1.100" stroke-dasharray="2 1.500"/><path d="M-.5-2v7l1.800-1.800h3z" fill="#fff" stroke="#111" stroke-width=".9"/><path d="M1.500 3l1.800 4" stroke="#111" stroke-width="2"/></g><g transform="translate(882 113.2) scale(.88)"><path d="M-4-6v9l2.300-2.300h3.700z" fill="#fff" stroke="#111" stroke-width="1"/><path d="M-1.200 .5l2.300 5" stroke="#111" stroke-width="2.200"/><path d="M5-6.500l2 2-2 2-2-2z" fill="#e81818"/></g><g transform="translate(865 129.4) scale(.88)"><path d="M-4-3.500l7-1 1.500 8.500h-9z" fill="none" stroke="#1a2fb0" stroke-width="1.150"/><rect x="-5.2" y="-4.7" width="2.400" height="2.400" fill="#111"/><rect x="1.8" y="-5.7" width="2.400" height="2.400" fill="#111"/><rect x="3.3" y="2.8" width="2.400" height="2.400" fill="#111"/><rect x="-5.7" y="2.8" width="2.400" height="2.400" fill="#111"/></g><g transform="translate(882 129.4) scale(.88)"><path d="M-5-6l10.500 11.500" fill="none" stroke="#222" stroke-width="1.150"/></g><g transform="translate(865 145.6) scale(.88)"><path d="M-5.500-5.500l9 9" fill="none" stroke="#222" stroke-width="1.150"/><path d="M5.500 5.500l-5-1.500 3.500-3.500z" fill="#111"/></g><g transform="translate(882 145.6) scale(.88)"><path d="M-6 0h12M0-6v12" fill="none" stroke="#222" stroke-width="1.500"/></g><g transform="translate(865 161.8) scale(.88)"><path d="M-5-6q5 5 10 11.500M5-6q-5 6-10 11.500" fill="none" stroke="#222" stroke-width="1.150"/><rect x="-6.5" y="4.5" width="2" height="2" fill="#1a2fb0"/><rect x="4.5" y="-6" width="2" height="2" fill="#1a2fb0"/><rect x="3" y="2" width="2" height="2" fill="#1a2fb0"/></g><g transform="translate(882 161.8) scale(.88)"><path d="M-5 4.500v-5l4-3.500 3.500 3.500 3-4.500" fill="none" stroke="#222" stroke-width="3.400" stroke-linejoin="miter"/><path d="M-5 4.500v-5l4-3.500 3.500 3.500 3-4.500" fill="none" stroke="#ddd" stroke-width="1.150"/></g><g transform="translate(865 178.0) scale(.88)"><path d="M-4.500-5q8 .5 8.500 10" fill="none" stroke="#111" stroke-width="1.500"/><rect x="-6" y="-6.5" width="2" height="2" fill="#1a2fb0"/><rect x="3" y="4.5" width="2" height="2" fill="#1a2fb0"/></g><g transform="translate(882 178.0) scale(.88)"><path d="M4-4.500q-8-2-8.500 2.500t8.500 4" fill="none" stroke="#222" stroke-width="1.150"/></g><g transform="translate(865 194.2) scale(.88)"><path d="M0 0h5a5 5 0 1 0-5 5z" fill="#fff" stroke="#222" stroke-width="1.150"/></g><g transform="translate(882 194.2) scale(.88)"><path d="M-6 0q6-7.500 12 0q-5 7-12 0z" fill="#fff" stroke="#222" stroke-width="1.150"/></g><g transform="translate(865 210.39999999999998) scale(.88)"><path d="M-5.500-5v10M5.500-5v10M-5 0h10" fill="none" stroke="#111" stroke-width="1.400"/><path d="M-5 0l2.500-2v4zM5 0l-2.500-2v4z" fill="#111"/></g><g transform="translate(882 210.39999999999998) scale(.88)"><path d="M-4-6h8M-4 6h8M0-5.500v11" fill="none" stroke="#111" stroke-width="1.400"/><path d="M0-5.500l-2 2.500h4zM0 5.500l-2-2.500h4z" fill="#111"/></g><g transform="translate(865 226.6) scale(.88)"><path d="M5-5.500l-10 10M-5.500 5h8" fill="none" stroke="#222" stroke-width="1.150"/><path d="M-5.500 5l1-4.500M-1-1q2.500 2 2 6" fill="none" stroke="#222" stroke-width="1.150"/></g><g transform="translate(882 226.6) scale(.88)"><path d="M-4.500-4.500l9 9" fill="none" stroke="#222" stroke-width="1.150"/><path d="M-6-3l3-3M3 6l3-3" fill="none" stroke="#222" stroke-width="1.150"/><path d="M-4.500-4.500l3.500 1-2.500 2.500zM4.500 4.500l-3.500-1 2.500-2.500z" fill="#111"/></g><g transform="translate(865 242.79999999999998) scale(.88)"><path d="M-1-4h7v7.500h-7v-3l-5 1 5-3z" fill="#fff" stroke="#222" stroke-width="1.100"/></g><g transform="translate(882 242.79999999999998) scale(.88)"><path d="M-5.500-5.500h11.500v8h-6.500l-4 3.500 1-3.500h-2z" fill="#fff" stroke="#222" stroke-width="1.100"/></g><g transform="translate(865 259.0) scale(.88)"><path d="M-5.500-5h11q1 0 1 1v5.500q0 1-1 1h-6l-4 4 1-4h-2q-1 0-1-1v-5.500q0-1 1-1z" fill="#fff" stroke="#222" stroke-width="1.100"/></g><g transform="translate(882 259.0) scale(.88)"><path d="M-3-4.500q1.500-2 3.500-.5q2.500-1.500 3.500 1q2.500 1 1 3q1 2.500-2 3q-1.500 2-3.500.5q-2.500 1-3.500-1q-2.500-1-1.500-3q-1-2.500 2.500-3z" fill="#fff" stroke="#222" stroke-width="1.100" stroke-dasharray="2 .8"/><circle cx="-4.500" cy="5" r="1" fill="none" stroke="#222" stroke-width=".8"/></g><g transform="translate(865 275.2) scale(.88)"><path d="M-6 3q2.500-4.500 4.500-1t4 0" fill="none" stroke="#222" stroke-width="1.150"/><path d="M.5 1.500l5-6 1.500 1.500-5 6z" fill="#111"/></g><g transform="translate(882 275.2) scale(.88)"><path d="M-6 5.500h12M-5 3q2-3.500 4-1" fill="none" stroke="#222" stroke-width="1.150"/><path d="M-.5 1.500l4.500-6 2 1.500-4.500 6z" fill="#111"/><rect x="-1" y="2.500" width="6" height="3" fill="#fff" stroke="#222" stroke-width=".9"/></g><g transform="translate(865 291.4) scale(.88)"><path d="M-3.500-5l8.500.5-3 4.500 3.500 5.500h-10.500q-1.500-5 1.500-10.500z" fill="#fff" stroke="#222" stroke-width="1.150"/></g><g transform="translate(882 291.4) scale(.88)"><path d="M-5 5.500v-8l5-3 5.500 2.500-2.500 3 2.500 5.500z" fill="#fff" stroke="#1a2fb0" stroke-width="1.100"/><path d="M-3.500-2q2-1.500 4 0M-3.500 1.500h4" stroke="#e81818" stroke-width="1.100" fill="none"/></g><g transform="translate(865 307.6) scale(.88)"><path d="M-5.500-4.500h11l-2.500 9h-8.500l3-4.500z" fill="#fff" stroke="#222" stroke-width="1.150"/></g><g transform="translate(882 307.6) scale(.88)"><path d="M-5.500-4.500h11l-2.500 9h-8.500l3-4.500z" fill="#fff" stroke="#222" stroke-width="1.100"/><rect x="-1" y="-2" width="4" height="4.500" fill="#e81818"/><path d="M0 0h2M0 1.500h2" stroke="#fff" stroke-width=".7"/></g><g transform="translate(865 323.79999999999995) scale(.88)"><ellipse rx="6" ry="4.300" fill="#fff" stroke="#222" stroke-width="1.150"/></g><g transform="translate(882 323.29999999999995) scale(.88)"><circle r="4.300" fill="#fff" stroke="#222" stroke-width="1.150"/></g><g transform="translate(865 340.0) scale(.88)"><rect x="-6" y="-4" width="12" height="8" fill="#fff" stroke="#222" stroke-width="1.150"/></g><g transform="translate(882 339.5) scale(.88)"><rect x="-4.500" y="-4.500" width="9" height="9" fill="#fff" stroke="#222" stroke-width="1.150"/></g><g transform="translate(864.5 356.2) scale(.88)"><rect x="-5" y="-4.500" width="10" height="9" rx="2.500" fill="#fff" stroke="#222" stroke-width="1.150"/></g><g transform="translate(882 356.2) scale(.88)"><path d="M-4-3q-1 7 4.500 6.500t3.500-6q-3.500 3.500-5.500 0" fill="none" stroke="#222" stroke-width="1.150"/></g><g transform="translate(865 372.4) scale(.88)"><path d="M-3.500 5.500q-1-6 3.500-6t4.500 2" fill="none" stroke="#222" stroke-width="1.100" stroke-dasharray="2.500 1.300"/><rect x="-6" y="3.5" width="2" height="2" fill="#1a2fb0"/><rect x="0.5" y="-5.5" width="2" height="2" fill="#1a2fb0"/></g><g transform="translate(882 372.4) scale(.88)"><path d="M-1.500-6q5 3.500 1.500 6t1.500 6" fill="none" stroke="#222" stroke-width="1.150"/></g><text x="865" y="394.59999999999997" font-family='"Liberation Serif",serif' font-size="17" text-anchor="middle" fill="#111">T</text><g transform="translate(882 388.59999999999997) scale(.88)"><rect x="-6" y="-6" width="7" height="6" fill="#1a2fb0"/><rect x="-4.500" y="-4.500" width="2.500" height="2.500" fill="#f0e020"/><path d="M-6 6l8-8h4.500v8z" fill="#6a8ae8"/><text x="3" y="6" font-size="8" font-style="italic" font-weight="bold" font-family='"Liberation Serif",serif' text-anchor="middle" fill="#e81818">A</text></g><text x="865" y="410.3" font-family='"Liberation Serif",serif' font-size="16" font-style="italic" font-weight="bold" text-anchor="middle" fill="#1a2fb0">A</text><g transform="translate(882 404.8) scale(.88)"><circle cx="-.5" cy="-1" r="5" fill="#1f6a3a" stroke="#113"/><path d="M-4-3q3-2 4 0t3.500 1M-5 0q3 2 5 0" stroke="#3a6ae8" stroke-width="1.500" fill="none"/><rect x="-1" y="3" width="7" height="3.500" fill="#222"/><path d="M0 4.800h5" stroke="#bbb" stroke-width="1" stroke-dasharray="1 1"/></g><g transform="translate(865 421.0) scale(.88)"><rect x="-4.500" y="-4" width="10" height="10" fill="#f0e23a" stroke="#111" stroke-width="1.100"/><path d="M-3 4l2.500-3 2 2 1.500-1.500 2 2.500z" fill="#555"/><circle cx="2.500" cy="-1" r="1.200" fill="#555"/><path d="M-6.500-6.500l3 3" stroke="#111" stroke-width="1.500"/></g><g transform="translate(882 421.0) scale(.88)"><rect x="-6" y="-5" width="12.500" height="10.500" fill="#fff" stroke="#223" stroke-width="1.150"/><path d="M-6-2.500h12.500" stroke="#223" stroke-width="1.600"/><path d="M-6 1h12.500M-2 -2v7.500M2.500 -2v7.500" stroke="#99a" stroke-width=".8"/></g><g transform="translate(865 437.2) scale(.88)"><path d="M-4.500-4.500l9 9M4.500-4.500l-9 9" stroke="#1a2fb0" stroke-width="1.800"/></g><g transform="translate(882 437.2) scale(.88)"><rect x="-4" y="-3" width="10" height="8.500" fill="none" stroke="#1a2fb0" stroke-width="1.100" stroke-dasharray="2 1.300"/><path d="M-6.500-6.500l4 4M-6.500-3h3M-3.500-6.500v3" stroke="#e8d820" stroke-width="1.150"/></g><g transform="translate(865 453.4) scale(.88)"><ellipse cx=".5" cy="1.500" rx="5.500" ry="4.500" fill="none" stroke="#1a2fb0" stroke-width="1.150"/><path d="M-6.500-6l4 3.500M-6.500-3h3M-3.500-6v3" stroke="#e8d820" stroke-width="1.150"/></g><g transform="translate(882 453.4) scale(.88)"><path d="M-3.500-4l8-1-2 5 3.500 5h-10z" fill="none" stroke="#1a2fb0" stroke-width="1.150"/><path d="M-6.500-6.500l3.500 3M-6.500-3.500h3M-3.500-6.500v3" stroke="#e8d820" stroke-width="1.150"/></g><path d="M884.500 464l2 1.800-2 1.800M887.500 464l2 1.800-2 1.800" fill="none" stroke="#fff" stroke-width="1"/><g transform="translate(12 10) scale(0.92)"><g transform="scale(0.9)"><rect x="-6.500" y="-5.500" width="13" height="11.500" fill="#fff" stroke="#555" stroke-width=".8"/><path d="M-5-3.500q5.500 3.500 0 7.500M5-3.500q-5.500 3.500 0 7.500" fill="none" stroke="#2a9ae0" stroke-width="2.200"/><path d="M-2.500 0h5" stroke="#c02ac0" stroke-width="1.500"/><path d="M-6-4.200h3.500M2.500-4.200h3.500" stroke="#22c82a" stroke-width="2"/><path d="M-6 4.500h3.500M2.500 4.500h3.500" stroke="#e6d21a" stroke-width="2"/></g></g><g transform="translate(17 27.5) scale(0.92)"><g transform="scale(0.85)"><rect x="-6.500" y="-5.500" width="13" height="11.500" fill="#fff" stroke="#555" stroke-width=".8"/><path d="M-5-3.500q5.500 3.500 0 7.500M5-3.500q-5.500 3.500 0 7.500" fill="none" stroke="#2a9ae0" stroke-width="2.200"/><path d="M-2.500 0h5" stroke="#c02ac0" stroke-width="1.500"/><path d="M-6-4.200h3.500M2.500-4.200h3.500" stroke="#22c82a" stroke-width="2"/><path d="M-6 4.500h3.500M2.500 4.500h3.500" stroke="#e6d21a" stroke-width="2"/></g></g></svg>
</div></body></html>
